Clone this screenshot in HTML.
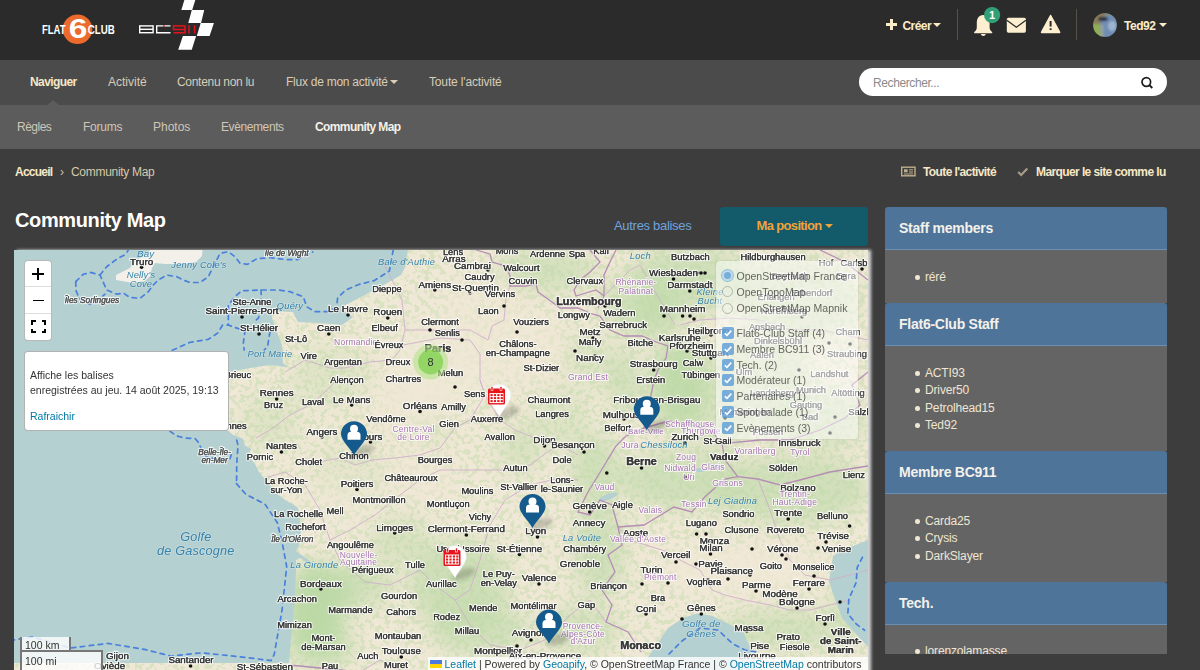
<!DOCTYPE html>
<html><head><meta charset="utf-8">
<style>
*{box-sizing:border-box;margin:0;padding:0}
html,body{width:1200px;height:670px;overflow:hidden;background:#3d3d3d;font-family:"Liberation Sans",sans-serif}
.a{position:absolute;white-space:nowrap}
#hdr{position:absolute;left:0;top:0;width:1200px;height:60px;background:#2b2b2b}
#nav{position:absolute;left:0;top:60px;width:1200px;height:45px;background:#4b4b4b}
#sub{position:absolute;left:0;top:105px;width:1200px;height:44px;background:#5c5c5c}
.t12{font-size:12px;line-height:12px}
.nv{color:#d9cdb8;font-size:12px;line-height:12px;top:76px}
.sn{color:#cfc6b6;font-size:12px;line-height:12px;top:121px}
.cream{color:#f6e7c6}
.sb{position:absolute;left:885px;width:282px}
.sbh{position:absolute;left:0;width:282px;height:43px;background:#4e7499;border-radius:3px 3px 0 0;border-bottom:1px solid #6a8fb3}
.sbh span{position:absolute;left:14px;top:13.8px;font-size:14px;line-height:14px;font-weight:bold;color:#f4f1ea;letter-spacing:-0.25px}
.sbb{position:absolute;left:0;width:282px;background:#646464}
.li{position:absolute;left:40px;font-size:12px;line-height:12px;color:#efe6d3;letter-spacing:-0.15px}
.li:before{content:"";position:absolute;left:-9.8px;top:4.2px;width:4.6px;height:4.6px;border-radius:50%;background:#efe6d3}
#map{position:absolute;left:14px;top:250px;width:854px;height:430px;background:#b4cfd0;overflow:hidden;box-shadow:3px 0 3px rgba(255,255,255,0.8)}
</style></head><body>
<div id="hdr"></div>
<div id="nav"></div>
<div id="sub"></div>

<!-- header -->
<svg width="240" height="60" style="position:absolute;left:0;top:0">
 <circle cx="77.5" cy="29.2" r="14.8" fill="#ec6a2c"/>
 <text x="78.2" y="38.2" font-family="Liberation Sans" font-weight="bold" font-size="27.5" fill="#fff" text-anchor="middle" transform="translate(78.2 38.2) scale(1.22 1.02) translate(-78.2 -38.2)">6</text>
 <text x="42" y="33.9" font-family="Liberation Sans" font-weight="bold" font-size="12" fill="#fff" textLength="23.6" lengthAdjust="spacingAndGlyphs">FLAT</text>
 <text x="87.8" y="33.9" font-family="Liberation Sans" font-weight="bold" font-size="12" fill="#fff" textLength="27" lengthAdjust="spacingAndGlyphs">CLUB</text>
 <polygon points="184.4,0 195.3,0 192.2,10.1 181.3,10.1" fill="#fff"/>
 <polygon points="191.8,10.1 204.2,10.1 201.1,22.9 188.3,22.9" fill="#fff"/>
 <polygon points="200.7,22.9 213.9,22.9 209.6,36.1 196.8,36.1" fill="#fff"/>
 <polygon points="182.9,36.1 196.1,36.1 191.8,49.7 178.2,49.7" fill="#fff"/>
 <g fill="none" stroke="#fff" stroke-width="1.4">
  <rect x="139.7" y="25.9" width="13.4" height="6.8"/>
  <line x1="139.7" y1="29.3" x2="153.1" y2="29.3"/>
  <polyline points="170.5,25.9 156.7,25.9 156.7,32.7 170.5,32.7"/>
 </g>
 <rect x="163" y="25.2" width="1.6" height="1.6" fill="#e3141b"/>
 <g fill="none" stroke="#e3141b" stroke-width="1.5">
  <rect x="173.5" y="25.9" width="11.5" height="3.6"/>
  <polyline points="185,29.5 185,32.7 173.5,32.7"/>
  <line x1="189" y1="25.2" x2="189" y2="33.4"/>
  <line x1="194.6" y1="25.2" x2="194.6" y2="33.4"/>
 </g>
</svg>
<div style="position:absolute;left:886.3px;top:23.2px;width:10.6px;height:2.6px;background:#fbecc8"></div>
<div style="position:absolute;left:890.3px;top:19.2px;width:2.6px;height:10.6px;background:#fbecc8"></div>
<div class="a" style="left:902.5px;top:19.6px;font-size:12px;line-height:12px;font-weight:bold;color:#fbecc8;letter-spacing:-0.55px">Créer</div>
<div style="position:absolute;left:933px;top:23px;width:0;height:0;border-left:4px solid transparent;border-right:4px solid transparent;border-top:4.5px solid #fbecc8"></div>
<div style="position:absolute;left:956.5px;top:9px;width:1.5px;height:31px;background:#57534b"></div>
<div style="position:absolute;left:1075.5px;top:9px;width:1.5px;height:31px;background:#57534b"></div>
<svg width="120" height="40" style="position:absolute;left:965px;top:5px">
 <!-- bell -->
 <path d="M18.3,10 C13.5,10 11.8,14 11.8,18 L11.8,22.5 C11.8,24.5 10.5,26 9.2,27 L9.2,28.2 L27.2,28.2 L27.2,27 C25.9,26 24.6,24.5 24.6,22.5 L24.6,18 C24.6,14 23,10 18.3,10 Z" fill="#fdefd0"/>
 <path d="M15.8,29 A2.6,2.6 0 0,0 20.8,29 Z" fill="#fdefd0"/>
 <circle cx="27.1" cy="10.1" r="8.1" fill="#31a076"/>
 <text x="27.1" y="14.3" font-family="Liberation Sans" font-size="11" font-weight="bold" fill="#fff" text-anchor="middle">1</text>
 <!-- envelope -->
 <rect x="41.8" y="12.8" width="19.1" height="14.9" rx="1.6" fill="#fdefd0"/>
 <polyline points="41.8,15.3 51.35,22.2 60.9,15.3" fill="none" stroke="#2b2b2b" stroke-width="1.3"/>
 <!-- warning -->
 <path d="M85.6,10.3 L94.6,26.8 Q95.2,27.7 94.1,27.7 L77.1,27.7 Q76,27.7 76.6,26.8 Z" fill="#fdefd0" stroke="#fdefd0" stroke-width="1.2" stroke-linejoin="round"/>
 <rect x="84.6" y="16" width="2" height="5.6" fill="#2b2b2b"/>
 <rect x="84.6" y="23.3" width="2" height="1.7" fill="#2b2b2b"/>
</svg>
<svg width="26" height="26" style="position:absolute;left:1092.3px;top:12.4px">
 <defs><clipPath id="av"><circle cx="13" cy="13" r="12"/></clipPath><filter id="avb"><feGaussianBlur stdDeviation="0.9"/></filter></defs>
 <g clip-path="url(#av)"><g filter="url(#avb)">
  <rect x="0" y="0" width="26" height="26" fill="#7f8a78"/>
  <rect x="0" y="0" width="13" height="12" fill="#8b7b5c"/>
  <rect x="0" y="12" width="11" height="14" fill="#8fae55"/>
  <ellipse cx="17" cy="15" rx="9" ry="12" fill="#6f8db5"/>
  <ellipse cx="20" cy="14" rx="4" ry="5" fill="#9fb5cf"/>
  <ellipse cx="11" cy="7" rx="5" ry="2.2" fill="#2b3346"/>
  <rect x="8.5" y="13" width="3" height="13" fill="#9aa0a0"/>
 </g></g>
</svg>
<div class="a" style="left:1124px;top:19.8px;font-size:12px;line-height:12px;font-weight:bold;color:#fbecc8;letter-spacing:-0.45px">Ted92</div>
<div style="position:absolute;left:1159px;top:23px;width:0;height:0;border-left:4px solid transparent;border-right:4px solid transparent;border-top:4.5px solid #fbecc8"></div>


<!-- nav -->
<div class="a nv cream" style="left:30px;font-weight:bold;letter-spacing:-0.6px">Naviguer</div>
<div class="a nv" style="left:108px">Activité</div>
<div class="a nv" style="left:177px;letter-spacing:-0.3px">Contenu non lu</div>
<div class="a nv" style="left:286px;letter-spacing:-0.25px">Flux de mon activité</div>
<div style="position:absolute;left:390px;top:80px;width:0;height:0;border-left:4px solid transparent;border-right:4px solid transparent;border-top:4.5px solid #d9cdb8"></div>
<div class="a nv" style="left:429px;letter-spacing:-0.15px">Toute l'activité</div>
<div style="position:absolute;left:858.5px;top:68px;width:308.5px;height:28px;background:#fff;border-radius:14px"></div>
<div class="a" style="left:873px;top:77px;font-size:12px;line-height:12px;color:#8a8a8a;letter-spacing:-0.4px">Rechercher...</div>
<svg width="16" height="16" style="position:absolute;left:1139px;top:74px"><circle cx="7.3" cy="8" r="4.3" fill="none" stroke="#1e1e1e" stroke-width="1.7"/><line x1="10.3" y1="11" x2="13.3" y2="14" stroke="#1e1e1e" stroke-width="1.9"/></svg>

<!-- subnav -->
<div style="position:absolute;left:47px;top:100px;width:0;height:0;border-left:6px solid transparent;border-right:6px solid transparent;border-bottom:5px solid #5c5c5c"></div>
<div class="a sn" style="left:17px;letter-spacing:-0.5px">Règles</div>
<div class="a sn" style="left:83px;letter-spacing:-0.25px">Forums</div>
<div class="a sn" style="left:153px">Photos</div>
<div class="a sn" style="left:221px;letter-spacing:-0.4px">Evènements</div>
<div class="a sn" style="left:315px;font-weight:bold;color:#f4f0e6;letter-spacing:-0.6px">Community Map</div>

<!-- breadcrumb -->
<div class="a" style="left:15px;top:166px;font-size:12px;line-height:12px;font-weight:bold;color:#f6e7c6;letter-spacing:-0.75px">Accueil</div>
<div class="a" style="left:60px;top:166px;font-size:12px;line-height:12px;color:#cfc0a0">›</div>
<div class="a" style="left:71px;top:166px;font-size:12px;line-height:12px;color:#d8c9a8;letter-spacing:-0.3px">Community Map</div>
<svg width="16" height="12" style="position:absolute;left:901px;top:166px"><rect x="0.7" y="1.2" width="13.3" height="8.6" fill="none" stroke="#bfae8e" stroke-width="1.4"/><rect x="3" y="3.3" width="3.6" height="3" fill="#bfae8e"/><line x1="8" y1="3.8" x2="12" y2="3.8" stroke="#bfae8e" stroke-width="1"/><line x1="8" y1="6" x2="12" y2="6" stroke="#bfae8e" stroke-width="1"/><line x1="3" y1="8" x2="12" y2="8" stroke="#bfae8e" stroke-width="0.9"/></svg>
<svg width="12" height="10" style="position:absolute;left:1016.5px;top:167px"><polyline points="1.2,5 4.2,8 10.3,1.5" fill="none" stroke="#a89c86" stroke-width="2.2"/></svg>
<div class="a" style="left:923px;top:166px;font-size:12px;line-height:12px;font-weight:bold;color:#f6e7c6;letter-spacing:-0.6px">Toute l'activité</div>
<div class="a" style="left:1036px;top:166px;font-size:12px;line-height:12px;font-weight:bold;color:#f6e7c6;letter-spacing:-0.6px">Marquer le site comme lu</div>

<!-- title -->
<div class="a" style="left:15px;top:210px;font-size:20px;line-height:20px;font-weight:bold;color:#fff;letter-spacing:-0.38px">Community Map</div>
<div class="a" style="left:614px;top:219px;font-size:13px;line-height:13px;color:#6fa3dc;letter-spacing:-0.3px">Autres balises</div>
<div style="position:absolute;left:720px;top:207px;width:148px;height:39px;background:#135a6a;border-radius:3px"></div>
<div class="a" style="left:756.5px;top:219px;font-size:13px;line-height:13px;font-weight:bold;color:#f2a23a;letter-spacing:-0.65px">Ma position</div>
<div style="position:absolute;left:824.5px;top:224px;width:0;height:0;border-left:4px solid transparent;border-right:4px solid transparent;border-top:4.5px solid #f2a23a"></div>

<!-- sidebar -->
<div class="sb" style="top:207px;height:447px;overflow:hidden">
  <div class="sbh" style="top:0"><span>Staff members</span></div>
  <div class="sbb" style="top:43px;height:53px"><div class="li" style="top:21px">réré</div></div>
  <div class="sbh" style="top:96px"><span>Flat6-Club Staff</span></div>
  <div class="sbb" style="top:139px;height:105px">
    <div class="li" style="top:21px">ACTI93</div>
    <div class="li" style="top:38px">Driver50</div>
    <div class="li" style="top:56px">Petrolhead15</div>
    <div class="li" style="top:73px">Ted92</div>
  </div>
  <div class="sbh" style="top:244px"><span>Membre BC911</span></div>
  <div class="sbb" style="top:287px;height:88px">
    <div class="li" style="top:21px">Carda25</div>
    <div class="li" style="top:38px">Crysis</div>
    <div class="li" style="top:56px">DarkSlayer</div>
  </div>
  <div class="sbh" style="top:375px"><span>Tech.</span></div>
  <div class="sbb" style="top:418px;height:100px">
    <div class="li" style="top:20px">lorenzolamasse</div>
  </div>
</div>

<!-- map -->
<div id="map"><!--MAP--><svg width="854" height="430" viewBox="14 250 854 430" style="position:absolute;left:0;top:0">
<defs><filter id="blur" x="-50%" y="-50%" width="200%" height="200%"><feGaussianBlur stdDeviation="10"/></filter><filter id="blur2" x="-50%" y="-50%" width="200%" height="200%"><feGaussianBlur stdDeviation="2"/></filter></defs>
<rect x="14" y="250" width="854" height="430" fill="#f0e8d6"/>
<g filter="url(#blur)">
<ellipse cx="315" cy="612" rx="30" ry="50" fill="#bcd9a6" opacity="1.0"/>
<ellipse cx="322" cy="648" rx="32" ry="16" fill="#bcd9a6" opacity="0.85"/>
<ellipse cx="335" cy="588" rx="25" ry="22" fill="#bcd9a6" opacity="0.6"/>
<ellipse cx="360" cy="585" rx="35" ry="25" fill="#bcd9a6" opacity="0.5"/>
<ellipse cx="400" cy="540" rx="30" ry="25" fill="#bcd9a6" opacity="0.45"/>
<ellipse cx="460" cy="585" rx="50" ry="45" fill="#bcd9a6" opacity="0.65"/>
<ellipse cx="480" cy="630" rx="50" ry="25" fill="#bcd9a6" opacity="0.6"/>
<ellipse cx="580" cy="630" rx="40" ry="25" fill="#bcd9a6" opacity="0.5"/>
<ellipse cx="600" cy="550" rx="25" ry="50" fill="#bcd9a6" opacity="0.6"/>
<ellipse cx="595" cy="470" rx="25" ry="35" fill="#bcd9a6" opacity="0.6"/>
<ellipse cx="680" cy="480" rx="60" ry="30" fill="#bcd9a6" opacity="0.6"/>
<ellipse cx="790" cy="490" rx="80" ry="35" fill="#bcd9a6" opacity="0.6"/>
<ellipse cx="780" cy="630" rx="60" ry="20" fill="#bcd9a6" opacity="0.55"/>
<ellipse cx="850" cy="610" rx="20" ry="35" fill="#bcd9a6" opacity="0.5"/>
<ellipse cx="680" cy="385" rx="30" ry="45" fill="#bcd9a6" opacity="0.9"/>
<ellipse cx="625" cy="385" rx="15" ry="35" fill="#bcd9a6" opacity="0.6"/>
<ellipse cx="650" cy="320" rx="30" ry="20" fill="#bcd9a6" opacity="0.6"/>
<ellipse cx="545" cy="270" rx="50" ry="22" fill="#bcd9a6" opacity="0.55"/>
<ellipse cx="690" cy="280" rx="60" ry="35" fill="#bcd9a6" opacity="0.6"/>
<ellipse cx="640" cy="300" rx="40" ry="30" fill="#bcd9a6" opacity="0.5"/>
<ellipse cx="760" cy="380" rx="50" ry="50" fill="#bcd9a6" opacity="0.4"/>
<ellipse cx="800" cy="300" rx="60" ry="40" fill="#bcd9a6" opacity="0.4"/>
<ellipse cx="820" cy="420" rx="50" ry="30" fill="#bcd9a6" opacity="0.45"/>
<ellipse cx="520" cy="450" rx="20" ry="25" fill="#bcd9a6" opacity="0.45"/>
<ellipse cx="560" cy="420" rx="30" ry="30" fill="#bcd9a6" opacity="0.35"/>
<ellipse cx="330" cy="375" rx="40" ry="30" fill="#bcd9a6" opacity="0.3"/>
<ellipse cx="270" cy="420" rx="30" ry="30" fill="#bcd9a6" opacity="0.3"/>
<ellipse cx="430" cy="430" rx="20" ry="15" fill="#bcd9a6" opacity="0.3"/>
<ellipse cx="350" cy="470" rx="40" ry="30" fill="#bcd9a6" opacity="0.2"/>
<ellipse cx="590" cy="360" rx="30" ry="30" fill="#bcd9a6" opacity="0.3"/>
<ellipse cx="720" cy="430" rx="25" ry="20" fill="#bcd9a6" opacity="0.5"/>
</g>
<filter id="spk" x="0" y="0" width="100%" height="100%" color-interpolation-filters="sRGB"><feTurbulence type="fractalNoise" baseFrequency="0.2" numOctaves="3" seed="7"/><feColorMatrix type="matrix" values="0 0 0 0 0.74  0 0 0 0 0.85  0 0 0 0 0.65  16 0 0 0 -8.3"/></filter>
<rect x="14" y="250" width="854" height="430" fill="#fff" filter="url(#spk)" opacity="0.42"/>
<g filter="url(#blur)">
<ellipse cx="440" cy="365" rx="55" ry="45" fill="#f0e8d6" opacity="0.7"/>
<ellipse cx="525" cy="345" rx="40" ry="40" fill="#f0e8d6" opacity="0.6"/>
<ellipse cx="410" cy="405" rx="40" ry="25" fill="#f0e8d6" opacity="0.6"/>
<ellipse cx="745" cy="570" rx="85" ry="25" fill="#f0e8d6" opacity="0.8"/>
<ellipse cx="420" cy="475" rx="40" ry="30" fill="#f0e8d6" opacity="0.5"/>
<ellipse cx="340" cy="500" rx="35" ry="30" fill="#f0e8d6" opacity="0.4"/>
<ellipse cx="480" cy="300" rx="40" ry="30" fill="#f0e8d6" opacity="0.5"/>
</g>
<polygon points="14.0,250.0 408.0,250.0 405.0,267.0 401.0,275.0 382.0,286.0 359.0,298.0 340.0,308.0 353.0,317.0 342.0,325.0 320.0,323.0 298.0,322.0 293.0,312.0 270.0,311.0 275.0,327.0 282.0,345.0 283.0,363.0 288.0,367.0 270.0,365.0 250.0,368.0 230.0,372.0 200.0,372.0 150.0,380.0 150.0,420.0 228.7,431.0 232.7,434.7 243.0,438.7 244.7,445.3 251.0,449.0 248.7,456.0 255.0,464.0 259.0,472.0 265.5,480.0 272.7,489.6 282.0,498.0 297.8,507.5 300.0,520.0 301.0,534.0 299.0,545.0 296.0,551.0 310.0,561.0 316.0,567.0 312.0,566.0 300.0,558.0 296.0,560.0 296.0,572.0 294.6,600.0 291.0,640.0 289.0,663.0 14.0,663.0" fill="#b5d0d0"/>
<polygon points="150.0,250.0 202.5,250.0 202.0,256.0 196.0,262.0 185.0,264.0 165.0,264.0 155.0,263.0 152.0,268.0 150.0,276.0 145.0,281.0 132.0,283.0 122.0,281.0 116.0,280.0 116.0,275.0 122.0,272.0 130.0,268.0 134.0,262.0 140.0,258.0 147.0,254.0" fill="#f2f0e8"/>
<polygon points="640.0,680.0 648.0,657.0 668.0,628.0 683.0,618.0 697.0,613.6 712.0,615.7 729.0,624.0 743.0,632.0 750.0,647.0 755.0,665.0 760.0,680.0" fill="#b5d0d0"/>
<polygon points="868.0,540.0 848.0,548.0 833.0,556.0 829.0,582.0 835.0,599.0 842.0,618.0 856.0,634.0 868.0,647.0" fill="#b5d0d0"/>
<ellipse cx="608" cy="497" rx="10" ry="3" fill="#b5d0d0" transform="rotate(-20 608 497)"/>
<ellipse cx="700" cy="470" rx="6" ry="2" fill="#b5d0d0" transform="rotate(0 700 470)"/>
<ellipse cx="717" cy="467" rx="5" ry="2" fill="#b5d0d0" transform="rotate(30 717 467)"/>
<polyline points="285.0,372.0 305.0,360.0 330.0,368.0 345.0,368.0 370.0,362.0 392.0,360.0 400.0,350.0 405.0,330.0 402.0,300.0 395.0,286.0 382.0,260.0" fill="none" stroke="#cfb0cc" stroke-width="0.9"/>
<polyline points="256.0,438.0 270.0,430.0 290.0,415.0 310.0,405.0 325.0,392.0 335.0,382.0" fill="none" stroke="#cfb0cc" stroke-width="0.9"/>
<polyline points="300.0,462.0 318.0,462.0 340.0,458.0 355.0,465.0 372.0,460.0 395.0,458.0 420.0,455.0 440.0,448.0 455.0,428.0 470.0,420.0 485.0,395.0 480.0,380.0 480.0,354.0 470.0,340.0 440.0,338.0 403.0,345.0" fill="none" stroke="#cfb0cc" stroke-width="0.9"/>
<polyline points="405.0,330.0 430.0,330.0 470.0,330.0 488.0,340.0 492.0,326.0 504.0,320.0 506.0,298.0 510.0,286.0" fill="none" stroke="#cfb0cc" stroke-width="0.9"/>
<polyline points="480.0,380.0 485.0,395.0 500.0,420.0 515.0,430.0 540.0,440.0 560.0,445.0 578.0,455.0" fill="none" stroke="#cfb0cc" stroke-width="0.9"/>
<polyline points="265.0,478.0 285.0,472.0 305.0,485.0 320.0,510.0 330.0,540.0 340.0,560.0 365.0,582.0 390.0,585.0 420.0,570.0 435.0,585.0 455.0,600.0 470.0,590.0 480.0,560.0 490.0,525.0 505.0,500.0 530.0,485.0 560.0,478.0 578.0,480.0" fill="none" stroke="#cfb0cc" stroke-width="0.9"/>
<polyline points="330.0,540.0 350.0,530.0 375.0,515.0 400.0,495.0 420.0,480.0 440.0,470.0 470.0,470.0 505.0,470.0 530.0,465.0 550.0,450.0 560.0,445.0" fill="none" stroke="#cfb0cc" stroke-width="0.9"/>
<polyline points="455.0,600.0 470.0,625.0 490.0,645.0 520.0,650.0 545.0,640.0 570.0,615.0 590.0,600.0 606.0,622.0" fill="none" stroke="#cfb0cc" stroke-width="0.9"/>
<polyline points="618.0,527.0 630.0,540.0 668.0,552.0 680.0,560.0 700.0,570.0 712.0,590.0 725.0,595.0 745.0,600.0 770.0,605.0 790.0,610.0 810.0,610.0 830.0,605.0 850.0,600.0" fill="none" stroke="#cfb0cc" stroke-width="0.9"/>
<polyline points="758.0,479.0 770.0,510.0 780.0,540.0 790.0,560.0 805.0,575.0 830.0,580.0 850.0,575.0 868.0,570.0" fill="none" stroke="#cfb0cc" stroke-width="0.9"/>
<polyline points="604.0,296.0 630.0,270.0 640.0,265.0 660.0,300.0 675.0,325.0" fill="none" stroke="#cfb0cc" stroke-width="0.9"/>
<polyline points="680.0,325.0 700.0,320.0 730.0,318.0 760.0,320.0 790.0,330.0 820.0,330.0 845.0,335.0 868.0,340.0" fill="none" stroke="#cfb0cc" stroke-width="0.9"/>
<polyline points="360.0,672.0 380.0,660.0 400.0,670.0" fill="none" stroke="#cfb0cc" stroke-width="0.9"/>
<polyline points="476.0,250.0 490.0,254.0 492.0,262.0 506.0,266.0 510.0,276.0 510.0,286.0 526.0,286.0 536.0,284.0 538.0,292.0 552.0,302.0 560.0,308.0 578.0,308.0 592.0,314.0 600.0,316.0 610.0,330.0 624.0,336.0 642.0,336.0 656.0,342.0 668.0,346.0 666.0,358.0 658.0,370.0 654.0,380.0 650.0,400.0 646.0,415.0 644.0,428.0" fill="none" stroke="#b58db5" stroke-width="1.3"/>
<polyline points="590.0,250.0 600.0,262.0 590.0,272.0 580.0,280.0 574.0,290.0 576.0,296.0 596.0,290.0 604.0,296.0 598.0,308.0" fill="none" stroke="#b58db5" stroke-width="1.3"/>
<polyline points="616.0,250.0 610.0,262.0 604.0,275.0 604.0,296.0" fill="none" stroke="#b58db5" stroke-width="1.3"/>
<polyline points="644.0,428.0 626.0,436.0 616.0,446.0 600.6,471.5 588.0,492.0 578.0,512.0 590.0,515.0 600.0,500.0 612.0,505.0 618.0,527.0" fill="none" stroke="#b58db5" stroke-width="1.3"/>
<polyline points="644.0,428.0 669.0,421.0 694.5,426.0 712.0,431.0 722.0,443.6 725.0,460.0 737.7,476.6" fill="none" stroke="#b58db5" stroke-width="1.3"/>
<polyline points="618.0,527.0 644.0,525.0 674.0,507.0 692.0,512.0 704.7,497.0 725.0,479.0 737.7,476.6 758.0,479.0" fill="none" stroke="#b58db5" stroke-width="1.3"/>
<polyline points="618.0,527.0 622.0,545.0 608.0,555.0 615.0,572.0 602.0,590.0 612.0,605.0 606.0,622.0 628.0,632.0 641.0,652.0" fill="none" stroke="#b58db5" stroke-width="1.3"/>
<polyline points="758.0,479.0 780.0,485.0 800.0,480.0 830.0,472.0 868.0,466.0" fill="none" stroke="#b58db5" stroke-width="1.3"/>
<polyline points="722.0,443.6 760.0,440.0 790.0,440.0 820.0,430.0 845.0,418.0 860.0,405.0 852.0,385.0 868.0,372.0" fill="none" stroke="#b58db5" stroke-width="1.3"/>
<polyline points="820.0,250.0 845.0,262.0 868.0,280.0" fill="none" stroke="#b58db5" stroke-width="1.3"/>
<polyline points="289.0,665.0 320.0,668.0 360.0,672.0" fill="none" stroke="#b58db5" stroke-width="1.3"/>
<polyline points="75.8,281.7 83.3,274.2 90.8,272.5 100.0,275.0 106.7,290.0 116.7,294.2 123.3,293.0 130.0,297.5 140.0,298.3 148.3,291.7 153.3,285.0 158.3,280.0 166.7,275.0 176.7,276.7 183.3,280.0 190.0,282.5 200.0,282.5 208.3,276.7 210.8,271.7 216.7,260.0 220.0,253.3 228.3,251.7 235.0,256.7 240.0,263.3 247.5,264.4 257.0,258.6 270.5,257.7 285.8,259.6 297.3,259.6 305.0,255.8 312.7,252.0" fill="none" stroke="#4a80dc" stroke-width="1.7" stroke-dasharray="4.5,4.5" stroke-linecap="round"/>
<polyline points="75.8,281.7 75.8,290.0 79.2,298.3 90.0,304.2 100.0,298.3 105.0,294.2" fill="none" stroke="#4a80dc" stroke-width="1.7" stroke-dasharray="4.5,4.5" stroke-linecap="round"/>
<polyline points="100.0,275.0 106.7,266.7 116.7,259.2 125.8,254.2 128.3,250.0" fill="none" stroke="#4a80dc" stroke-width="1.7" stroke-dasharray="4.5,4.5" stroke-linecap="round"/>
<polyline points="393.2,250.0 389.4,271.0 374.0,280.7 358.7,284.5 345.3,290.3 337.6,298.0 336.7,306.7 328.3,311.7 315.0,311.7 306.7,306.7 303.3,296.7 290.0,291.7 278.3,290.0 261.0,290.0 241.7,290.8 236.7,295.0 228.3,305.0 228.3,325.0" fill="none" stroke="#4a80dc" stroke-width="1.7" stroke-dasharray="4.5,4.5" stroke-linecap="round"/>
<polyline points="261.0,290.0 261.7,310.0 258.3,318.3 255.0,320.8" fill="none" stroke="#4a80dc" stroke-width="1.7" stroke-dasharray="4.5,4.5" stroke-linecap="round"/>
<polyline points="172.3,350.3 189.5,342.5 208.4,339.3 217.8,333.0 222.5,325.2 228.3,325.0 235.0,327.5 245.0,330.8 243.3,343.3 244.2,350.0" fill="none" stroke="#4a80dc" stroke-width="1.7" stroke-dasharray="4.5,4.5" stroke-linecap="round"/>
<polyline points="270.0,331.7 267.5,346.7 264.2,350.0" fill="none" stroke="#4a80dc" stroke-width="1.7" stroke-dasharray="4.5,4.5" stroke-linecap="round"/>
<polyline points="170.0,431.3 176.7,436.0 184.7,438.0 195.3,438.7 198.7,442.7 202.0,450.7 206.0,456.0 216.7,460.0 230.0,458.7 232.7,450.7" fill="none" stroke="#4a80dc" stroke-width="1.7" stroke-dasharray="4.5,4.5" stroke-linecap="round"/>
<polyline points="236.7,440.0 238.0,445.3 236.7,464.0 236.6,480.0 235.0,482.0 246.0,494.5 264.8,503.9 277.3,522.7 282.0,541.5 286.7,566.6 282.0,610.5 274.2,654.4 271.0,660.6 246.0,657.5 202.0,652.8 170.7,656.0 145.7,649.7 108.0,643.4 70.4,648.0 32.8,637.0 14.0,640.0" fill="none" stroke="#4a80dc" stroke-width="1.7" stroke-dasharray="4.5,4.5" stroke-linecap="round"/>
<polyline points="669.0,654.0 682.0,641.0 700.0,628.0 718.0,630.0 733.0,644.0 745.0,650.0 756.0,652.0" fill="none" stroke="#4a80dc" stroke-width="1.7" stroke-dasharray="4.5,4.5" stroke-linecap="round"/>
<polyline points="862.5,557.2 857.2,567.6 856.2,582.3 848.9,599.0 847.8,613.6 856.2,624.0 864.6,630.3" fill="none" stroke="#4a80dc" stroke-width="1.7" stroke-dasharray="4.5,4.5" stroke-linecap="round"/>
<circle cx="141.6" cy="267.2" r="1.8" fill="#111"/>
<circle cx="242" cy="317" r="1.8" fill="#111"/>
<circle cx="259" cy="334" r="1.8" fill="#111"/>
<circle cx="276.7" cy="399" r="1.8" fill="#111"/>
<circle cx="281.4" cy="452" r="1.8" fill="#111"/>
<circle cx="348" cy="315" r="1.8" fill="#111"/>
<circle cx="387.8" cy="318" r="1.8" fill="#111"/>
<circle cx="328.8" cy="334" r="1.8" fill="#111"/>
<circle cx="351.7" cy="405" r="1.8" fill="#111"/>
<circle cx="420" cy="411.4" r="1.8" fill="#111"/>
<circle cx="322" cy="437" r="1.8" fill="#111"/>
<circle cx="370.5" cy="442" r="1.8" fill="#111"/>
<circle cx="544.5" cy="446" r="1.8" fill="#111"/>
<circle cx="584" cy="452" r="1.8" fill="#111"/>
<circle cx="434.8" cy="290" r="1.8" fill="#111"/>
<circle cx="488" cy="270" r="1.8" fill="#111"/>
<circle cx="470" cy="293" r="1.8" fill="#111"/>
<circle cx="517" cy="332" r="1.8" fill="#111"/>
<circle cx="504" cy="306" r="1.8" fill="#111"/>
<circle cx="605" cy="306" r="1.8" fill="#111"/>
<circle cx="673.5" cy="279" r="1.8" fill="#111"/>
<circle cx="689.8" cy="291" r="1.8" fill="#111"/>
<circle cx="697" cy="273" r="1.8" fill="#111"/>
<circle cx="701" cy="273" r="1.8" fill="#111"/>
<circle cx="705" cy="273" r="1.8" fill="#111"/>
<circle cx="682.6" cy="316" r="1.8" fill="#111"/>
<circle cx="664" cy="316" r="1.8" fill="#111"/>
<circle cx="690" cy="316" r="1.8" fill="#111"/>
<circle cx="694" cy="319" r="1.8" fill="#111"/>
<circle cx="644" cy="325" r="1.8" fill="#111"/>
<circle cx="593" cy="338" r="1.8" fill="#111"/>
<circle cx="595" cy="356" r="1.8" fill="#111"/>
<circle cx="653.7" cy="370" r="1.8" fill="#111"/>
<circle cx="687" cy="351" r="1.8" fill="#111"/>
<circle cx="711" cy="358" r="1.8" fill="#111"/>
<circle cx="679.8" cy="344" r="1.8" fill="#111"/>
<circle cx="711" cy="335" r="1.8" fill="#111"/>
<circle cx="575" cy="351" r="1.8" fill="#111"/>
<circle cx="624" cy="419" r="1.8" fill="#111"/>
<circle cx="646" cy="421" r="1.8" fill="#111"/>
<circle cx="685" cy="443" r="1.8" fill="#111"/>
<circle cx="725" cy="418" r="1.8" fill="#111"/>
<circle cx="862" cy="269" r="1.8" fill="#111"/>
<circle cx="783" cy="307" r="1.8" fill="#111"/>
<circle cx="802" cy="317" r="1.8" fill="#111"/>
<circle cx="850" cy="344" r="1.8" fill="#111"/>
<circle cx="829" cy="343" r="1.8" fill="#111"/>
<circle cx="799" cy="370" r="1.8" fill="#111"/>
<circle cx="835" cy="417" r="1.8" fill="#111"/>
<circle cx="830" cy="433" r="1.8" fill="#111"/>
<circle cx="357" cy="489.5" r="1.8" fill="#111"/>
<circle cx="394.7" cy="533" r="1.8" fill="#111"/>
<circle cx="466.3" cy="535" r="1.8" fill="#111"/>
<circle cx="537.5" cy="537" r="1.8" fill="#111"/>
<circle cx="519.4" cy="554.5" r="1.8" fill="#111"/>
<circle cx="539" cy="584" r="1.8" fill="#111"/>
<circle cx="320.9" cy="589" r="1.8" fill="#111"/>
<circle cx="401.3" cy="657" r="1.8" fill="#111"/>
<circle cx="517" cy="646" r="1.8" fill="#111"/>
<circle cx="531" cy="640" r="1.8" fill="#111"/>
<circle cx="606.8" cy="473" r="1.8" fill="#111"/>
<circle cx="641.5" cy="468" r="1.8" fill="#111"/>
<circle cx="589.7" cy="512" r="1.8" fill="#111"/>
<circle cx="589" cy="525" r="1.8" fill="#111"/>
<circle cx="685" cy="477" r="1.8" fill="#111"/>
<circle cx="788.2" cy="519" r="1.8" fill="#111"/>
<circle cx="849.6" cy="526" r="1.8" fill="#111"/>
<circle cx="696.6" cy="534" r="1.8" fill="#111"/>
<circle cx="706" cy="534" r="1.8" fill="#111"/>
<circle cx="712" cy="542" r="1.8" fill="#111"/>
<circle cx="826" cy="542" r="1.8" fill="#111"/>
<circle cx="752" cy="549" r="1.8" fill="#111"/>
<circle cx="782" cy="555" r="1.8" fill="#111"/>
<circle cx="818" cy="548" r="1.8" fill="#111"/>
<circle cx="786" cy="559" r="1.8" fill="#111"/>
<circle cx="696" cy="564" r="1.8" fill="#111"/>
<circle cx="710.5" cy="554" r="1.8" fill="#111"/>
<circle cx="676" cy="562" r="1.8" fill="#111"/>
<circle cx="750" cy="575" r="1.8" fill="#111"/>
<circle cx="728" cy="579" r="1.8" fill="#111"/>
<circle cx="642" cy="584" r="1.8" fill="#111"/>
<circle cx="668" cy="583" r="1.8" fill="#111"/>
<circle cx="708" cy="580" r="1.8" fill="#111"/>
<circle cx="814" cy="576" r="1.8" fill="#111"/>
<circle cx="809" cy="589" r="1.8" fill="#111"/>
<circle cx="756" cy="591" r="1.8" fill="#111"/>
<circle cx="797" cy="608" r="1.8" fill="#111"/>
<circle cx="646" cy="614" r="1.8" fill="#111"/>
<circle cx="701.3" cy="614" r="1.8" fill="#111"/>
<circle cx="682" cy="619" r="1.8" fill="#111"/>
<circle cx="825" cy="624" r="1.8" fill="#111"/>
<circle cx="747" cy="631" r="1.8" fill="#111"/>
<circle cx="840" cy="602" r="1.8" fill="#111"/>
<circle cx="190.6" cy="666" r="1.8" fill="#111"/>
<circle cx="455" cy="387" r="1.8" fill="#111"/>
<circle cx="462" cy="340" r="1.8" fill="#111"/>
<circle cx="430" cy="330" r="1.8" fill="#111"/>
<g font-family="Liberation Sans, sans-serif" text-anchor="middle" stroke="#fff" stroke-opacity="0.75" stroke-width="2" paint-order="stroke" stroke-linejoin="round">
<text x="141.6" y="264.5" font-size="9.8" fill="#383838" letter-spacing="0" stroke-width="2.4">Truro</text>
<text x="141.6" y="264.5" font-size="9.8" fill="#383838" letter-spacing="0" stroke="#383838" stroke-width="0.25" stroke-opacity="1">Truro</text>
<text x="145.7" y="256.5" font-size="9.8" fill="#3582ab" letter-spacing="0.2" stroke-opacity="0.25" stroke-width="1.5" font-style="italic">Bay</text>
<text x="141" y="278.4" font-size="9.3" fill="#3582ab" letter-spacing="0.2" stroke-opacity="0.25" stroke-width="1.5" font-style="italic">Nelly's</text>
<text x="141" y="287.4" font-size="9.3" fill="#3582ab" letter-spacing="0.2" stroke-opacity="0.25" stroke-width="1.5" font-style="italic">Cove</text>
<text x="199" y="268.4" font-size="9.3" fill="#3582ab" letter-spacing="0.2" stroke-opacity="0.25" stroke-width="1.5" font-style="italic">Jenny Cole's</text>
<text x="92" y="302.5" font-size="8.3" fill="#555" letter-spacing="0" stroke-width="2.4" font-style="italic">Îles Sorlingues</text>
<text x="92" y="302.5" font-size="8.3" fill="#555" letter-spacing="0" stroke="#555" stroke-width="0.25" stroke-opacity="1" font-style="italic">Îles Sorlingues</text>
<text x="286.7" y="256.0" font-size="8.3" fill="#555" letter-spacing="0" stroke-width="2.4" font-style="italic">Île de Wight</text>
<text x="286.7" y="256.0" font-size="8.3" fill="#555" letter-spacing="0" stroke="#555" stroke-width="0.25" stroke-opacity="1" font-style="italic">Île de Wight</text>
<text x="252" y="305.1" font-size="9.3" fill="#383838" letter-spacing="0" stroke-width="2.4">Ste-Anne</text>
<text x="252" y="305.1" font-size="9.3" fill="#383838" letter-spacing="0" stroke="#383838" stroke-width="0.25" stroke-opacity="1">Ste-Anne</text>
<text x="242" y="314.0" font-size="9.8" fill="#383838" letter-spacing="0" stroke-width="2.4">Saint-Pierre-Port</text>
<text x="242" y="314.0" font-size="9.8" fill="#383838" letter-spacing="0" stroke="#383838" stroke-width="0.25" stroke-opacity="1">Saint-Pierre-Port</text>
<text x="259" y="331.2" font-size="9.8" fill="#383838" letter-spacing="0" stroke-width="2.4">St-Hélier</text>
<text x="259" y="331.2" font-size="9.8" fill="#383838" letter-spacing="0" stroke="#383838" stroke-width="0.25" stroke-opacity="1">St-Hélier</text>
<text x="290" y="309.4" font-size="9.3" fill="#3582ab" letter-spacing="0.2" stroke-opacity="0.25" stroke-width="1.5" font-style="italic">Quéry</text>
<text x="270" y="356.8" font-size="9.3" fill="#3582ab" letter-spacing="0.2" stroke-opacity="0.25" stroke-width="1.5" font-style="italic">Port Marie</text>
<text x="296" y="342.4" font-size="9.3" fill="#383838" letter-spacing="0" stroke-width="2.4">St-Lô</text>
<text x="296" y="342.4" font-size="9.3" fill="#383838" letter-spacing="0" stroke="#383838" stroke-width="0.25" stroke-opacity="1">St-Lô</text>
<text x="238" y="378.2" font-size="9.3" fill="#383838" letter-spacing="0" stroke-width="2.4">Brieuc</text>
<text x="238" y="378.2" font-size="9.3" fill="#383838" letter-spacing="0" stroke="#383838" stroke-width="0.25" stroke-opacity="1">Brieuc</text>
<text x="276.7" y="396.1" font-size="9.8" fill="#383838" letter-spacing="0" stroke-width="2.4">Rennes</text>
<text x="276.7" y="396.1" font-size="9.8" fill="#383838" letter-spacing="0" stroke="#383838" stroke-width="0.25" stroke-opacity="1">Rennes</text>
<text x="273.6" y="407.9" font-size="9.3" fill="#383838" letter-spacing="0" stroke-width="2.4">Bruz</text>
<text x="273.6" y="407.9" font-size="9.3" fill="#383838" letter-spacing="0" stroke="#383838" stroke-width="0.25" stroke-opacity="1">Bruz</text>
<text x="236.6" y="429.4" font-size="9.3" fill="#383838" letter-spacing="0" stroke-width="2.4">nnes</text>
<text x="236.6" y="429.4" font-size="9.3" fill="#383838" letter-spacing="0" stroke="#383838" stroke-width="0.25" stroke-opacity="1">nnes</text>
<text x="281.4" y="448.8" font-size="9.8" fill="#383838" letter-spacing="0" stroke-width="2.4">Nantes</text>
<text x="281.4" y="448.8" font-size="9.8" fill="#383838" letter-spacing="0" stroke="#383838" stroke-width="0.25" stroke-opacity="1">Nantes</text>
<text x="214.6" y="455.0" font-size="8.3" fill="#555" letter-spacing="0" stroke-width="2.4" font-style="italic">Belle-Île-</text>
<text x="214.6" y="455.0" font-size="8.3" fill="#555" letter-spacing="0" stroke="#555" stroke-width="0.25" stroke-opacity="1" font-style="italic">Belle-Île-</text>
<text x="214.6" y="463.0" font-size="8.3" fill="#555" letter-spacing="0" stroke-width="2.4" font-style="italic">en-Mer</text>
<text x="214.6" y="463.0" font-size="8.3" fill="#555" letter-spacing="0" stroke="#555" stroke-width="0.25" stroke-opacity="1" font-style="italic">en-Mer</text>
<text x="260" y="460.4" font-size="9.3" fill="#383838" letter-spacing="0" stroke-width="2.4">Pornic</text>
<text x="260" y="460.4" font-size="9.3" fill="#383838" letter-spacing="0" stroke="#383838" stroke-width="0.25" stroke-opacity="1">Pornic</text>
<text x="406.6" y="265.4" font-size="9.3" fill="#3582ab" letter-spacing="0.2" stroke-opacity="0.25" stroke-width="1.5" font-style="italic">Baie d'Authie</text>
<text x="387" y="292.4" font-size="9.3" fill="#383838" letter-spacing="0" stroke-width="2.4">Dieppe</text>
<text x="387" y="292.4" font-size="9.3" fill="#383838" letter-spacing="0" stroke="#383838" stroke-width="0.25" stroke-opacity="1">Dieppe</text>
<text x="348" y="312.1" font-size="9.8" fill="#383838" letter-spacing="0" stroke-width="2.4">Le Havre</text>
<text x="348" y="312.1" font-size="9.8" fill="#383838" letter-spacing="0" stroke="#383838" stroke-width="0.25" stroke-opacity="1">Le Havre</text>
<text x="387.8" y="315.3" font-size="9.8" fill="#383838" letter-spacing="0" stroke-width="2.4">Rouen</text>
<text x="387.8" y="315.3" font-size="9.8" fill="#383838" letter-spacing="0" stroke="#383838" stroke-width="0.25" stroke-opacity="1">Rouen</text>
<text x="328.8" y="331.2" font-size="9.8" fill="#383838" letter-spacing="0" stroke-width="2.4">Caen</text>
<text x="328.8" y="331.2" font-size="9.8" fill="#383838" letter-spacing="0" stroke="#383838" stroke-width="0.25" stroke-opacity="1">Caen</text>
<text x="384.6" y="331.1" font-size="9.3" fill="#383838" letter-spacing="0" stroke-width="2.4">Elbeuf</text>
<text x="384.6" y="331.1" font-size="9.3" fill="#383838" letter-spacing="0" stroke="#383838" stroke-width="0.25" stroke-opacity="1">Elbeuf</text>
<text x="355.8" y="344.6" font-size="8.5" fill="#a673b0" letter-spacing="0.2" stroke-width="2">Normandie</text>
<text x="389" y="348.1" font-size="9.3" fill="#383838" letter-spacing="0" stroke-width="2.4">Évreux</text>
<text x="389" y="348.1" font-size="9.3" fill="#383838" letter-spacing="0" stroke="#383838" stroke-width="0.25" stroke-opacity="1">Évreux</text>
<text x="308.8" y="359.0" font-size="9.3" fill="#383838" letter-spacing="0" stroke-width="2.4">Vire</text>
<text x="308.8" y="359.0" font-size="9.3" fill="#383838" letter-spacing="0" stroke="#383838" stroke-width="0.25" stroke-opacity="1">Vire</text>
<text x="343" y="364.7" font-size="9.3" fill="#383838" letter-spacing="0" stroke-width="2.4">Argentan</text>
<text x="343" y="364.7" font-size="9.3" fill="#383838" letter-spacing="0" stroke="#383838" stroke-width="0.25" stroke-opacity="1">Argentan</text>
<text x="398" y="364.7" font-size="9.3" fill="#383838" letter-spacing="0" stroke-width="2.4">Dreux</text>
<text x="398" y="364.7" font-size="9.3" fill="#383838" letter-spacing="0" stroke="#383838" stroke-width="0.25" stroke-opacity="1">Dreux</text>
<text x="347" y="382.9" font-size="9.3" fill="#383838" letter-spacing="0" stroke-width="2.4">Alençon</text>
<text x="347" y="382.9" font-size="9.3" fill="#383838" letter-spacing="0" stroke="#383838" stroke-width="0.25" stroke-opacity="1">Alençon</text>
<text x="403.4" y="382.4" font-size="9.3" fill="#383838" letter-spacing="0" stroke-width="2.4">Chartres</text>
<text x="403.4" y="382.4" font-size="9.3" fill="#383838" letter-spacing="0" stroke="#383838" stroke-width="0.25" stroke-opacity="1">Chartres</text>
<text x="313" y="404.8" font-size="9.3" fill="#383838" letter-spacing="0" stroke-width="2.4">Laval</text>
<text x="313" y="404.8" font-size="9.3" fill="#383838" letter-spacing="0" stroke="#383838" stroke-width="0.25" stroke-opacity="1">Laval</text>
<text x="351.7" y="402.5" font-size="9.8" fill="#383838" letter-spacing="0" stroke-width="2.4">Le Mans</text>
<text x="351.7" y="402.5" font-size="9.8" fill="#383838" letter-spacing="0" stroke="#383838" stroke-width="0.25" stroke-opacity="1">Le Mans</text>
<text x="386" y="421.7" font-size="9.3" fill="#383838" letter-spacing="0" stroke-width="2.4">Vendôme</text>
<text x="386" y="421.7" font-size="9.3" fill="#383838" letter-spacing="0" stroke="#383838" stroke-width="0.25" stroke-opacity="1">Vendôme</text>
<text x="420" y="408.5" font-size="9.8" fill="#383838" letter-spacing="0" stroke-width="2.4">Orléans</text>
<text x="420" y="408.5" font-size="9.8" fill="#383838" letter-spacing="0" stroke="#383838" stroke-width="0.25" stroke-opacity="1">Orléans</text>
<text x="413.5" y="432.4" font-size="8.5" fill="#a673b0" letter-spacing="0.2" stroke-width="2">Centre-Val</text>
<text x="413.5" y="440.1" font-size="8.5" fill="#a673b0" letter-spacing="0.2" stroke-width="2">de Loire</text>
<text x="322" y="434.5" font-size="9.8" fill="#383838" letter-spacing="0" stroke-width="2.4">Angers</text>
<text x="322" y="434.5" font-size="9.8" fill="#383838" letter-spacing="0" stroke="#383838" stroke-width="0.25" stroke-opacity="1">Angers</text>
<text x="370.5" y="439.5" font-size="9.8" fill="#383838" letter-spacing="0" stroke-width="2.4">Tours</text>
<text x="370.5" y="439.5" font-size="9.8" fill="#383838" letter-spacing="0" stroke="#383838" stroke-width="0.25" stroke-opacity="1">Tours</text>
<text x="354" y="459.4" font-size="9.3" fill="#383838" letter-spacing="0" stroke-width="2.4">Chinon</text>
<text x="354" y="459.4" font-size="9.3" fill="#383838" letter-spacing="0" stroke="#383838" stroke-width="0.25" stroke-opacity="1">Chinon</text>
<text x="435" y="462.9" font-size="9.3" fill="#383838" letter-spacing="0" stroke-width="2.4">Bourges</text>
<text x="435" y="462.9" font-size="9.3" fill="#383838" letter-spacing="0" stroke="#383838" stroke-width="0.25" stroke-opacity="1">Bourges</text>
<text x="449" y="427.4" font-size="9.3" fill="#383838" letter-spacing="0" stroke-width="2.4">Gien</text>
<text x="449" y="427.4" font-size="9.3" fill="#383838" letter-spacing="0" stroke="#383838" stroke-width="0.25" stroke-opacity="1">Gien</text>
<text x="453.6" y="410.1" font-size="9.3" fill="#383838" letter-spacing="0" stroke-width="2.4">Amilly</text>
<text x="453.6" y="410.1" font-size="9.3" fill="#383838" letter-spacing="0" stroke="#383838" stroke-width="0.25" stroke-opacity="1">Amilly</text>
<text x="474.6" y="397.4" font-size="9.3" fill="#383838" letter-spacing="0" stroke-width="2.4">Sens</text>
<text x="474.6" y="397.4" font-size="9.3" fill="#383838" letter-spacing="0" stroke="#383838" stroke-width="0.25" stroke-opacity="1">Sens</text>
<text x="487" y="421.7" font-size="9.3" fill="#383838" letter-spacing="0" stroke-width="2.4">Auxerre</text>
<text x="487" y="421.7" font-size="9.3" fill="#383838" letter-spacing="0" stroke="#383838" stroke-width="0.25" stroke-opacity="1">Auxerre</text>
<text x="499.7" y="439.9" font-size="9.3" fill="#383838" letter-spacing="0" stroke-width="2.4">Avallon</text>
<text x="499.7" y="439.9" font-size="9.3" fill="#383838" letter-spacing="0" stroke="#383838" stroke-width="0.25" stroke-opacity="1">Avallon</text>
<text x="544.5" y="443.2" font-size="9.8" fill="#383838" letter-spacing="0" stroke-width="2.4">Dijon</text>
<text x="544.5" y="443.2" font-size="9.8" fill="#383838" letter-spacing="0" stroke="#383838" stroke-width="0.25" stroke-opacity="1">Dijon</text>
<text x="573" y="447.5" font-size="9.8" fill="#383838" letter-spacing="0" stroke-width="2.4">Besançon</text>
<text x="573" y="447.5" font-size="9.8" fill="#383838" letter-spacing="0" stroke="#383838" stroke-width="0.25" stroke-opacity="1">Besançon</text>
<text x="549" y="402.9" font-size="9.3" fill="#383838" letter-spacing="0" stroke-width="2.4">Chaumont</text>
<text x="549" y="402.9" font-size="9.3" fill="#383838" letter-spacing="0" stroke="#383838" stroke-width="0.25" stroke-opacity="1">Chaumont</text>
<text x="552" y="417.4" font-size="9.3" fill="#383838" letter-spacing="0" stroke-width="2.4">Langres</text>
<text x="552" y="417.4" font-size="9.3" fill="#383838" letter-spacing="0" stroke="#383838" stroke-width="0.25" stroke-opacity="1">Langres</text>
<text x="541.4" y="371.0" font-size="9.3" fill="#383838" letter-spacing="0" stroke-width="2.4">St-Dizier</text>
<text x="541.4" y="371.0" font-size="9.3" fill="#383838" letter-spacing="0" stroke="#383838" stroke-width="0.25" stroke-opacity="1">St-Dizier</text>
<text x="517.9" y="347.4" font-size="9.3" fill="#383838" letter-spacing="0" stroke-width="2.4">Châlons-</text>
<text x="517.9" y="347.4" font-size="9.3" fill="#383838" letter-spacing="0" stroke="#383838" stroke-width="0.25" stroke-opacity="1">Châlons-</text>
<text x="517.9" y="356.2" font-size="9.3" fill="#383838" letter-spacing="0" stroke-width="2.4">en-Champagne</text>
<text x="517.9" y="356.2" font-size="9.3" fill="#383838" letter-spacing="0" stroke="#383838" stroke-width="0.25" stroke-opacity="1">en-Champagne</text>
<text x="531" y="324.9" font-size="9.3" fill="#383838" letter-spacing="0" stroke-width="2.4">Vouziers</text>
<text x="531" y="324.9" font-size="9.3" fill="#383838" letter-spacing="0" stroke="#383838" stroke-width="0.25" stroke-opacity="1">Vouziers</text>
<text x="488.4" y="313.9" font-size="9.3" fill="#383838" letter-spacing="0" stroke-width="2.4">Laon</text>
<text x="488.4" y="313.9" font-size="9.3" fill="#383838" letter-spacing="0" stroke="#383838" stroke-width="0.25" stroke-opacity="1">Laon</text>
<text x="440" y="325.4" font-size="9.3" fill="#383838" letter-spacing="0" stroke-width="2.4">Clermont</text>
<text x="440" y="325.4" font-size="9.3" fill="#383838" letter-spacing="0" stroke="#383838" stroke-width="0.25" stroke-opacity="1">Clermont</text>
<text x="447.3" y="336.4" font-size="9.3" fill="#383838" letter-spacing="0" stroke-width="2.4">Senlis</text>
<text x="447.3" y="336.4" font-size="9.3" fill="#383838" letter-spacing="0" stroke="#383838" stroke-width="0.25" stroke-opacity="1">Senlis</text>
<text x="438" y="351.7" font-size="10.8" fill="#383838" letter-spacing="0" stroke-width="2.4" font-weight="bold">Paris</text>
<text x="438" y="351.7" font-size="10.8" fill="#383838" letter-spacing="0" stroke="#383838" stroke-width="0.25" stroke-opacity="1" font-weight="bold">Paris</text>
<text x="450.5" y="376.4" font-size="9.3" fill="#383838" letter-spacing="0" stroke-width="2.4">Melun</text>
<text x="450.5" y="376.4" font-size="9.3" fill="#383838" letter-spacing="0" stroke="#383838" stroke-width="0.25" stroke-opacity="1">Melun</text>
<text x="434.8" y="287.5" font-size="9.8" fill="#383838" letter-spacing="0" stroke-width="2.4">Amiens</text>
<text x="434.8" y="287.5" font-size="9.8" fill="#383838" letter-spacing="0" stroke="#383838" stroke-width="0.25" stroke-opacity="1">Amiens</text>
<text x="475.5" y="290.5" font-size="9.8" fill="#383838" letter-spacing="0" stroke-width="2.4">St-Quentin</text>
<text x="475.5" y="290.5" font-size="9.8" fill="#383838" letter-spacing="0" stroke="#383838" stroke-width="0.25" stroke-opacity="1">St-Quentin</text>
<text x="472.4" y="269.2" font-size="9.8" fill="#383838" letter-spacing="0" stroke-width="2.4">Cambrai</text>
<text x="472.4" y="269.2" font-size="9.8" fill="#383838" letter-spacing="0" stroke="#383838" stroke-width="0.25" stroke-opacity="1">Cambrai</text>
<text x="454" y="262.3" font-size="9.8" fill="#383838" letter-spacing="0" stroke-width="2.4">Arras</text>
<text x="454" y="262.3" font-size="9.8" fill="#383838" letter-spacing="0" stroke="#383838" stroke-width="0.25" stroke-opacity="1">Arras</text>
<text x="479.6" y="280.0" font-size="9.3" fill="#383838" letter-spacing="0" stroke-width="2.4">Caudry</text>
<text x="479.6" y="280.0" font-size="9.3" fill="#383838" letter-spacing="0" stroke="#383838" stroke-width="0.25" stroke-opacity="1">Caudry</text>
<text x="521.3" y="271.4" font-size="9.3" fill="#383838" letter-spacing="0" stroke-width="2.4">Walcourt</text>
<text x="521.3" y="271.4" font-size="9.3" fill="#383838" letter-spacing="0" stroke="#383838" stroke-width="0.25" stroke-opacity="1">Walcourt</text>
<text x="523" y="284.1" font-size="9.3" fill="#383838" letter-spacing="0" stroke-width="2.4">Couvin</text>
<text x="523" y="284.1" font-size="9.3" fill="#383838" letter-spacing="0" stroke="#383838" stroke-width="0.25" stroke-opacity="1">Couvin</text>
<text x="500" y="297.4" font-size="9.3" fill="#383838" letter-spacing="0" stroke-width="2.4">Vervins</text>
<text x="500" y="297.4" font-size="9.3" fill="#383838" letter-spacing="0" stroke="#383838" stroke-width="0.25" stroke-opacity="1">Vervins</text>
<text x="453" y="254.9" font-size="9.3" fill="#383838" letter-spacing="0" stroke-width="2.4">Lens</text>
<text x="453" y="254.9" font-size="9.3" fill="#383838" letter-spacing="0" stroke="#383838" stroke-width="0.25" stroke-opacity="1">Lens</text>
<text x="507" y="254.4" font-size="9.3" fill="#383838" letter-spacing="0" stroke-width="2.4">Mons</text>
<text x="507" y="254.4" font-size="9.3" fill="#383838" letter-spacing="0" stroke="#383838" stroke-width="0.25" stroke-opacity="1">Mons</text>
<text x="601" y="254.4" font-size="9.3" fill="#383838" letter-spacing="0" stroke-width="2.4">Kall</text>
<text x="601" y="254.4" font-size="9.3" fill="#383838" letter-spacing="0" stroke="#383838" stroke-width="0.25" stroke-opacity="1">Kall</text>
<text x="790" y="279.4" font-size="9.3" fill="#555" letter-spacing="0" stroke-width="2.4">Bayreuth</text>
<text x="790" y="279.4" font-size="9.3" fill="#555" letter-spacing="0" stroke="#555" stroke-width="0.25" stroke-opacity="1">Bayreuth</text>
<text x="744" y="375.4" font-size="9.3" fill="#555" letter-spacing="0" stroke-width="2.4">Ulm</text>
<text x="744" y="375.4" font-size="9.3" fill="#555" letter-spacing="0" stroke="#555" stroke-width="0.25" stroke-opacity="1">Ulm</text>
<text x="772" y="396.4" font-size="9.3" fill="#555" letter-spacing="0" stroke-width="2.4">Landsberg</text>
<text x="772" y="396.4" font-size="9.3" fill="#555" letter-spacing="0" stroke="#555" stroke-width="0.25" stroke-opacity="1">Landsberg</text>
<text x="745" y="415.4" font-size="9.3" fill="#555" letter-spacing="0" stroke-width="2.4">Memmingen</text>
<text x="745" y="415.4" font-size="9.3" fill="#555" letter-spacing="0" stroke="#555" stroke-width="0.25" stroke-opacity="1">Memmingen</text>
<text x="547.6" y="257.2" font-size="9.3" fill="#383838" letter-spacing="0" stroke-width="2.4">Ardenne</text>
<text x="547.6" y="257.2" font-size="9.3" fill="#383838" letter-spacing="0" stroke="#383838" stroke-width="0.25" stroke-opacity="1">Ardenne</text>
<text x="577" y="257.2" font-size="9.3" fill="#383838" letter-spacing="0" stroke-width="2.4">Spa</text>
<text x="577" y="257.2" font-size="9.3" fill="#383838" letter-spacing="0" stroke="#383838" stroke-width="0.25" stroke-opacity="1">Spa</text>
<text x="640.3" y="259.0" font-size="9.3" fill="#3582ab" letter-spacing="0.2" stroke-opacity="0.25" stroke-width="1.5" font-style="italic">Loch</text>
<text x="690.4" y="259.7" font-size="9.3" fill="#383838" letter-spacing="0" stroke-width="2.4">Butzbach</text>
<text x="690.4" y="259.7" font-size="9.3" fill="#383838" letter-spacing="0" stroke="#383838" stroke-width="0.25" stroke-opacity="1">Butzbach</text>
<text x="773" y="260.4" font-size="9.3" fill="#383838" letter-spacing="0" stroke-width="2.4">Hildburghausen</text>
<text x="773" y="260.4" font-size="9.3" fill="#383838" letter-spacing="0" stroke="#383838" stroke-width="0.25" stroke-opacity="1">Hildburghausen</text>
<text x="854" y="265.9" font-size="9.3" fill="#383838" letter-spacing="0" stroke-width="2.4">Carlsb</text>
<text x="854" y="265.9" font-size="9.3" fill="#383838" letter-spacing="0" stroke="#383838" stroke-width="0.25" stroke-opacity="1">Carlsb</text>
<text x="673.5" y="276.1" font-size="9.8" fill="#383838" letter-spacing="0" stroke-width="2.4">Wiesbaden</text>
<text x="673.5" y="276.1" font-size="9.8" fill="#383838" letter-spacing="0" stroke="#383838" stroke-width="0.25" stroke-opacity="1">Wiesbaden</text>
<text x="689.8" y="288.0" font-size="9.8" fill="#383838" letter-spacing="0" stroke-width="2.4">Darmstadt</text>
<text x="689.8" y="288.0" font-size="9.8" fill="#383838" letter-spacing="0" stroke="#383838" stroke-width="0.25" stroke-opacity="1">Darmstadt</text>
<text x="584.8" y="284.1" font-size="9.3" fill="#383838" letter-spacing="0" stroke-width="2.4">Clervaux</text>
<text x="584.8" y="284.1" font-size="9.3" fill="#383838" letter-spacing="0" stroke="#383838" stroke-width="0.25" stroke-opacity="1">Clervaux</text>
<text x="635.9" y="285.4" font-size="8.5" fill="#a673b0" letter-spacing="0.2" stroke-width="2">Rhénanie-</text>
<text x="635.9" y="293.9" font-size="8.5" fill="#a673b0" letter-spacing="0.2" stroke-width="2">Palatinat</text>
<text x="710" y="295.4" font-size="9.3" fill="#3582ab" letter-spacing="0.2" stroke-opacity="0.25" stroke-width="1.5" font-style="italic">Kleine</text>
<text x="710" y="304.4" font-size="9.3" fill="#3582ab" letter-spacing="0.2" stroke-opacity="0.25" stroke-width="1.5" font-style="italic">Bucht</text>
<text x="588.9" y="304.9" font-size="10.8" fill="#383838" letter-spacing="0" stroke-width="2.4" font-weight="bold">Luxembourg</text>
<text x="588.9" y="304.9" font-size="10.8" fill="#383838" letter-spacing="0" stroke="#383838" stroke-width="0.25" stroke-opacity="1" font-weight="bold">Luxembourg</text>
<text x="619.3" y="316.1" font-size="9.3" fill="#383838" letter-spacing="0" stroke-width="2.4">Wadern</text>
<text x="619.3" y="316.1" font-size="9.3" fill="#383838" letter-spacing="0" stroke="#383838" stroke-width="0.25" stroke-opacity="1">Wadern</text>
<text x="573.8" y="317.7" font-size="9.3" fill="#383838" letter-spacing="0" stroke-width="2.4">Longwy</text>
<text x="573.8" y="317.7" font-size="9.3" fill="#383838" letter-spacing="0" stroke="#383838" stroke-width="0.25" stroke-opacity="1">Longwy</text>
<text x="682.6" y="312.1" font-size="9.8" fill="#383838" letter-spacing="0" stroke-width="2.4">Mannheim</text>
<text x="682.6" y="312.1" font-size="9.8" fill="#383838" letter-spacing="0" stroke="#383838" stroke-width="0.25" stroke-opacity="1">Mannheim</text>
<text x="623.3" y="327.8" font-size="9.8" fill="#383838" letter-spacing="0" stroke-width="2.4">Sarrebruck</text>
<text x="623.3" y="327.8" font-size="9.8" fill="#383838" letter-spacing="0" stroke="#383838" stroke-width="0.25" stroke-opacity="1">Sarrebruck</text>
<text x="590" y="335.0" font-size="9.8" fill="#383838" letter-spacing="0" stroke-width="2.4">Metz</text>
<text x="590" y="335.0" font-size="9.8" fill="#383838" letter-spacing="0" stroke="#383838" stroke-width="0.25" stroke-opacity="1">Metz</text>
<text x="590" y="345.2" font-size="9.3" fill="#383838" letter-spacing="0" stroke-width="2.4">Marly</text>
<text x="590" y="345.2" font-size="9.3" fill="#383838" letter-spacing="0" stroke="#383838" stroke-width="0.25" stroke-opacity="1">Marly</text>
<text x="640.3" y="345.9" font-size="9.3" fill="#383838" letter-spacing="0" stroke-width="2.4">Bitche</text>
<text x="640.3" y="345.9" font-size="9.3" fill="#383838" letter-spacing="0" stroke="#383838" stroke-width="0.25" stroke-opacity="1">Bitche</text>
<text x="679.8" y="341.3" font-size="9.8" fill="#383838" letter-spacing="0" stroke-width="2.4">Karlsruhe</text>
<text x="679.8" y="341.3" font-size="9.8" fill="#383838" letter-spacing="0" stroke="#383838" stroke-width="0.25" stroke-opacity="1">Karlsruhe</text>
<text x="691.4" y="349.1" font-size="9.8" fill="#383838" letter-spacing="0" stroke-width="2.4">Pforzheim</text>
<text x="691.4" y="349.1" font-size="9.8" fill="#383838" letter-spacing="0" stroke="#383838" stroke-width="0.25" stroke-opacity="1">Pforzheim</text>
<text x="708.6" y="333.5" font-size="9.8" fill="#383838" letter-spacing="0" stroke-width="2.4">Heilbronn</text>
<text x="708.6" y="333.5" font-size="9.8" fill="#383838" letter-spacing="0" stroke="#383838" stroke-width="0.25" stroke-opacity="1">Heilbronn</text>
<text x="710.2" y="356.0" font-size="9.8" fill="#383838" letter-spacing="0" stroke-width="2.4">Stuttgart</text>
<text x="710.2" y="356.0" font-size="9.8" fill="#383838" letter-spacing="0" stroke="#383838" stroke-width="0.25" stroke-opacity="1">Stuttgart</text>
<text x="590" y="361.0" font-size="9.8" fill="#383838" letter-spacing="0" stroke-width="2.4">Nancy</text>
<text x="590" y="361.0" font-size="9.8" fill="#383838" letter-spacing="0" stroke="#383838" stroke-width="0.25" stroke-opacity="1">Nancy</text>
<text x="653.7" y="367.0" font-size="9.8" fill="#383838" letter-spacing="0" stroke-width="2.4">Strasbourg</text>
<text x="653.7" y="367.0" font-size="9.8" fill="#383838" letter-spacing="0" stroke="#383838" stroke-width="0.25" stroke-opacity="1">Strasbourg</text>
<text x="693" y="366.3" font-size="9.3" fill="#383838" letter-spacing="0" stroke-width="2.4">Calw</text>
<text x="693" y="366.3" font-size="9.3" fill="#383838" letter-spacing="0" stroke="#383838" stroke-width="0.25" stroke-opacity="1">Calw</text>
<text x="588" y="380.1" font-size="8.5" fill="#a673b0" letter-spacing="0.2" stroke-width="2">Grand Est</text>
<text x="650.6" y="383.4" font-size="9.3" fill="#383838" letter-spacing="0" stroke-width="2.4">Erstein</text>
<text x="650.6" y="383.4" font-size="9.3" fill="#383838" letter-spacing="0" stroke="#383838" stroke-width="0.25" stroke-opacity="1">Erstein</text>
<text x="700.8" y="378.2" font-size="9.3" fill="#383838" letter-spacing="0" stroke-width="2.4">Tübingen</text>
<text x="700.8" y="378.2" font-size="9.3" fill="#383838" letter-spacing="0" stroke="#383838" stroke-width="0.25" stroke-opacity="1">Tübingen</text>
<text x="656.9" y="403.3" font-size="9.8" fill="#383838" letter-spacing="0" stroke-width="2.4">Fribourg-en-Brisgau</text>
<text x="656.9" y="403.3" font-size="9.8" fill="#383838" letter-spacing="0" stroke="#383838" stroke-width="0.25" stroke-opacity="1">Fribourg-en-Brisgau</text>
<text x="624" y="417.5" font-size="9.8" fill="#383838" letter-spacing="0" stroke-width="2.4">Mulhouse</text>
<text x="624" y="417.5" font-size="9.8" fill="#383838" letter-spacing="0" stroke="#383838" stroke-width="0.25" stroke-opacity="1">Mulhouse</text>
<text x="617.7" y="431.1" font-size="9.3" fill="#383838" letter-spacing="0" stroke-width="2.4">Belfort</text>
<text x="617.7" y="431.1" font-size="9.3" fill="#383838" letter-spacing="0" stroke="#383838" stroke-width="0.25" stroke-opacity="1">Belfort</text>
<text x="689.8" y="426.5" font-size="8.5" fill="#a673b0" letter-spacing="0.2" stroke-width="2">Schaffhouse</text>
<text x="701" y="433.6" font-size="8.5" fill="#a673b0" letter-spacing="0.2" stroke-width="2">Thurgovie</text>
<text x="646" y="433.9" font-size="8.1" fill="#a673b0" letter-spacing="0.2" stroke-width="2">Bâle-Ville</text>
<text x="685" y="440.0" font-size="9.8" fill="#383838" letter-spacing="0" stroke-width="2.4">Zurich</text>
<text x="685" y="440.0" font-size="9.8" fill="#383838" letter-spacing="0" stroke="#383838" stroke-width="0.25" stroke-opacity="1">Zurich</text>
<text x="717.4" y="443.7" font-size="9.3" fill="#383838" letter-spacing="0" stroke-width="2.4">St-Gall</text>
<text x="717.4" y="443.7" font-size="9.3" fill="#383838" letter-spacing="0" stroke="#383838" stroke-width="0.25" stroke-opacity="1">St-Gall</text>
<text x="630" y="448.1" font-size="8.5" fill="#a673b0" letter-spacing="0.2" stroke-width="2">Jura</text>
<text x="664" y="448.4" font-size="9.3" fill="#3582ab" letter-spacing="0.2" stroke-opacity="0.25" stroke-width="1.5" font-style="italic">Chessiloch</text>
<text x="799.5" y="445.5" font-size="9.8" fill="#383838" letter-spacing="0" stroke-width="2.4">Innsbruck</text>
<text x="799.5" y="445.5" font-size="9.8" fill="#383838" letter-spacing="0" stroke="#383838" stroke-width="0.25" stroke-opacity="1">Innsbruck</text>
<text x="811" y="392.9" font-size="9.3" fill="#555" letter-spacing="0" stroke-width="2.4">Munich</text>
<text x="811" y="392.9" font-size="9.3" fill="#555" letter-spacing="0" stroke="#555" stroke-width="0.25" stroke-opacity="1">Munich</text>
<text x="829.3" y="377.2" font-size="9.3" fill="#555" letter-spacing="0" stroke-width="2.4">Landshut</text>
<text x="829.3" y="377.2" font-size="9.3" fill="#555" letter-spacing="0" stroke="#555" stroke-width="0.25" stroke-opacity="1">Landshut</text>
<text x="847" y="356.9" font-size="9.3" fill="#555" letter-spacing="0" stroke-width="2.4">Straubing</text>
<text x="847" y="356.9" font-size="9.3" fill="#555" letter-spacing="0" stroke="#555" stroke-width="0.25" stroke-opacity="1">Straubing</text>
<text x="848" y="396.0" font-size="9.3" fill="#555" letter-spacing="0" stroke-width="2.4">Altötting</text>
<text x="848" y="396.0" font-size="9.3" fill="#555" letter-spacing="0" stroke="#555" stroke-width="0.25" stroke-opacity="1">Altötting</text>
<text x="848" y="335.4" font-size="9.3" fill="#555" letter-spacing="0" stroke-width="2.4">Cham</text>
<text x="848" y="335.4" font-size="9.3" fill="#555" letter-spacing="0" stroke="#555" stroke-width="0.25" stroke-opacity="1">Cham</text>
<text x="860" y="414.9" font-size="9.3" fill="#383838" letter-spacing="0" stroke-width="2.4">Salzb</text>
<text x="860" y="414.9" font-size="9.3" fill="#383838" letter-spacing="0" stroke="#383838" stroke-width="0.25" stroke-opacity="1">Salzb</text>
<text x="784" y="314.4" font-size="9.3" fill="#555" letter-spacing="0" stroke-width="2.4">Nuremberg</text>
<text x="784" y="314.4" font-size="9.3" fill="#555" letter-spacing="0" stroke="#555" stroke-width="0.25" stroke-opacity="1">Nuremberg</text>
<text x="776" y="300.4" font-size="9.3" fill="#555" letter-spacing="0" stroke-width="2.4">Erlangen</text>
<text x="776" y="300.4" font-size="9.3" fill="#555" letter-spacing="0" stroke="#555" stroke-width="0.25" stroke-opacity="1">Erlangen</text>
<text x="846" y="279.2" font-size="9.3" fill="#555" letter-spacing="0" stroke-width="2.4">Egra</text>
<text x="846" y="279.2" font-size="9.3" fill="#555" letter-spacing="0" stroke="#555" stroke-width="0.25" stroke-opacity="1">Egra</text>
<text x="826" y="265.9" font-size="9.3" fill="#555" letter-spacing="0" stroke-width="2.4">Hof</text>
<text x="826" y="265.9" font-size="9.3" fill="#555" letter-spacing="0" stroke="#555" stroke-width="0.25" stroke-opacity="1">Hof</text>
<text x="812" y="296.4" font-size="9.3" fill="#555" letter-spacing="0" stroke-width="2.4">Erbendorf</text>
<text x="812" y="296.4" font-size="9.3" fill="#555" letter-spacing="0" stroke="#555" stroke-width="0.25" stroke-opacity="1">Erbendorf</text>
<text x="778" y="344.4" font-size="9.3" fill="#555" letter-spacing="0" stroke-width="2.4">Dinkelsbühl</text>
<text x="778" y="344.4" font-size="9.3" fill="#555" letter-spacing="0" stroke="#555" stroke-width="0.25" stroke-opacity="1">Dinkelsbühl</text>
<text x="767" y="330.4" font-size="9.3" fill="#555" letter-spacing="0" stroke-width="2.4">Ansbach</text>
<text x="767" y="330.4" font-size="9.3" fill="#555" letter-spacing="0" stroke="#555" stroke-width="0.25" stroke-opacity="1">Ansbach</text>
<text x="762" y="358.4" font-size="9.3" fill="#555" letter-spacing="0" stroke-width="2.4">Aalen</text>
<text x="762" y="358.4" font-size="9.3" fill="#555" letter-spacing="0" stroke="#555" stroke-width="0.25" stroke-opacity="1">Aalen</text>
<text x="806" y="408.4" font-size="9.3" fill="#555" letter-spacing="0" stroke-width="2.4">Gauting</text>
<text x="806" y="408.4" font-size="9.3" fill="#555" letter-spacing="0" stroke="#555" stroke-width="0.25" stroke-opacity="1">Gauting</text>
<text x="810" y="420.4" font-size="9.3" fill="#555" letter-spacing="0" stroke-width="2.4">Bad</text>
<text x="810" y="420.4" font-size="9.3" fill="#555" letter-spacing="0" stroke="#555" stroke-width="0.25" stroke-opacity="1">Bad</text>
<text x="768" y="435.4" font-size="9.3" fill="#555" letter-spacing="0" stroke-width="2.4">Füssen</text>
<text x="768" y="435.4" font-size="9.3" fill="#555" letter-spacing="0" stroke="#555" stroke-width="0.25" stroke-opacity="1">Füssen</text>
<text x="308.7" y="465.4" font-size="9.3" fill="#383838" letter-spacing="0" stroke-width="2.4">Cholet</text>
<text x="308.7" y="465.4" font-size="9.3" fill="#383838" letter-spacing="0" stroke="#383838" stroke-width="0.25" stroke-opacity="1">Cholet</text>
<text x="515.5" y="471.4" font-size="9.3" fill="#383838" letter-spacing="0" stroke-width="2.4">Autun</text>
<text x="515.5" y="471.4" font-size="9.3" fill="#383838" letter-spacing="0" stroke="#383838" stroke-width="0.25" stroke-opacity="1">Autun</text>
<text x="562" y="463.4" font-size="9.3" fill="#383838" letter-spacing="0" stroke-width="2.4">Dole</text>
<text x="562" y="463.4" font-size="9.3" fill="#383838" letter-spacing="0" stroke="#383838" stroke-width="0.25" stroke-opacity="1">Dole</text>
<text x="286.4" y="483.9" font-size="9.3" fill="#383838" letter-spacing="0" stroke-width="2.4">La Roche-</text>
<text x="286.4" y="483.9" font-size="9.3" fill="#383838" letter-spacing="0" stroke="#383838" stroke-width="0.25" stroke-opacity="1">La Roche-</text>
<text x="286.4" y="492.8" font-size="9.3" fill="#383838" letter-spacing="0" stroke-width="2.4">sur-Yon</text>
<text x="286.4" y="492.8" font-size="9.3" fill="#383838" letter-spacing="0" stroke="#383838" stroke-width="0.25" stroke-opacity="1">sur-Yon</text>
<text x="357" y="487.0" font-size="9.8" fill="#383838" letter-spacing="0" stroke-width="2.4">Poitiers</text>
<text x="357" y="487.0" font-size="9.8" fill="#383838" letter-spacing="0" stroke="#383838" stroke-width="0.25" stroke-opacity="1">Poitiers</text>
<text x="411" y="480.6" font-size="9.3" fill="#383838" letter-spacing="0" stroke-width="2.4">Châteauroux</text>
<text x="411" y="480.6" font-size="9.3" fill="#383838" letter-spacing="0" stroke="#383838" stroke-width="0.25" stroke-opacity="1">Châteauroux</text>
<text x="477.4" y="494.4" font-size="9.3" fill="#383838" letter-spacing="0" stroke-width="2.4">Moulins</text>
<text x="477.4" y="494.4" font-size="9.3" fill="#383838" letter-spacing="0" stroke="#383838" stroke-width="0.25" stroke-opacity="1">Moulins</text>
<text x="518.8" y="490.2" font-size="9.3" fill="#383838" letter-spacing="0" stroke-width="2.4">St-Vallier</text>
<text x="518.8" y="490.2" font-size="9.3" fill="#383838" letter-spacing="0" stroke="#383838" stroke-width="0.25" stroke-opacity="1">St-Vallier</text>
<text x="562" y="482.9" font-size="9.3" fill="#383838" letter-spacing="0" stroke-width="2.4">Lons-</text>
<text x="562" y="482.9" font-size="9.3" fill="#383838" letter-spacing="0" stroke="#383838" stroke-width="0.25" stroke-opacity="1">Lons-</text>
<text x="562" y="491.8" font-size="9.3" fill="#383838" letter-spacing="0" stroke-width="2.4">le-Saunier</text>
<text x="562" y="491.8" font-size="9.3" fill="#383838" letter-spacing="0" stroke="#383838" stroke-width="0.25" stroke-opacity="1">le-Saunier</text>
<text x="379" y="502.6" font-size="9.3" fill="#383838" letter-spacing="0" stroke-width="2.4">Montmorillon</text>
<text x="379" y="502.6" font-size="9.3" fill="#383838" letter-spacing="0" stroke="#383838" stroke-width="0.25" stroke-opacity="1">Montmorillon</text>
<text x="448.2" y="506.9" font-size="9.3" fill="#383838" letter-spacing="0" stroke-width="2.4">Montluçon</text>
<text x="448.2" y="506.9" font-size="9.3" fill="#383838" letter-spacing="0" stroke="#383838" stroke-width="0.25" stroke-opacity="1">Montluçon</text>
<text x="298.6" y="517.4" font-size="9.3" fill="#383838" letter-spacing="0" stroke-width="2.4">La Rochelle</text>
<text x="298.6" y="517.4" font-size="9.3" fill="#383838" letter-spacing="0" stroke="#383838" stroke-width="0.25" stroke-opacity="1">La Rochelle</text>
<text x="335" y="514.1" font-size="9.3" fill="#383838" letter-spacing="0" stroke-width="2.4">Mell</text>
<text x="335" y="514.1" font-size="9.3" fill="#383838" letter-spacing="0" stroke="#383838" stroke-width="0.25" stroke-opacity="1">Mell</text>
<text x="480" y="519.7" font-size="9.3" fill="#383838" letter-spacing="0" stroke-width="2.4">Vichy</text>
<text x="480" y="519.7" font-size="9.3" fill="#383838" letter-spacing="0" stroke="#383838" stroke-width="0.25" stroke-opacity="1">Vichy</text>
<text x="305.4" y="530.4" font-size="9.3" fill="#383838" letter-spacing="0" stroke-width="2.4">Rochefort</text>
<text x="305.4" y="530.4" font-size="9.3" fill="#383838" letter-spacing="0" stroke="#383838" stroke-width="0.25" stroke-opacity="1">Rochefort</text>
<text x="394.7" y="530.5" font-size="9.8" fill="#383838" letter-spacing="0" stroke-width="2.4">Limoges</text>
<text x="394.7" y="530.5" font-size="9.8" fill="#383838" letter-spacing="0" stroke="#383838" stroke-width="0.25" stroke-opacity="1">Limoges</text>
<text x="466.3" y="532.3" font-size="9.8" fill="#383838" letter-spacing="0" stroke-width="2.4">Clermont-Ferrand</text>
<text x="466.3" y="532.3" font-size="9.8" fill="#383838" letter-spacing="0" stroke="#383838" stroke-width="0.25" stroke-opacity="1">Clermont-Ferrand</text>
<text x="292.3" y="541.6" font-size="8.3" fill="#555" letter-spacing="0" stroke-width="2.4" font-style="italic">Île d'Oléron</text>
<text x="292.3" y="541.6" font-size="8.3" fill="#555" letter-spacing="0" stroke="#555" stroke-width="0.25" stroke-opacity="1" font-style="italic">Île d'Oléron</text>
<text x="535.8" y="533.9" font-size="9.8" fill="#383838" letter-spacing="0" stroke-width="2.4">Lyon</text>
<text x="535.8" y="533.9" font-size="9.8" fill="#383838" letter-spacing="0" stroke="#383838" stroke-width="0.25" stroke-opacity="1">Lyon</text>
<text x="350.4" y="547.6" font-size="9.3" fill="#383838" letter-spacing="0" stroke-width="2.4">Angoulême</text>
<text x="350.4" y="547.6" font-size="9.3" fill="#383838" letter-spacing="0" stroke="#383838" stroke-width="0.25" stroke-opacity="1">Angoulême</text>
<text x="448" y="552.4" font-size="9.3" fill="#383838" letter-spacing="0" stroke-width="2.4">Ussel</text>
<text x="448" y="552.4" font-size="9.3" fill="#383838" letter-spacing="0" stroke="#383838" stroke-width="0.25" stroke-opacity="1">Ussel</text>
<text x="476" y="552.4" font-size="9.3" fill="#383838" letter-spacing="0" stroke-width="2.4">Issoire</text>
<text x="476" y="552.4" font-size="9.3" fill="#383838" letter-spacing="0" stroke="#383838" stroke-width="0.25" stroke-opacity="1">Issoire</text>
<text x="519.4" y="552.0" font-size="9.8" fill="#383838" letter-spacing="0" stroke-width="2.4">St-Étienne</text>
<text x="519.4" y="552.0" font-size="9.8" fill="#383838" letter-spacing="0" stroke="#383838" stroke-width="0.25" stroke-opacity="1">St-Étienne</text>
<text x="358.6" y="557.5" font-size="8.5" fill="#a673b0" letter-spacing="0.2" stroke-width="2">Nouvelle-</text>
<text x="358.6" y="565.3" font-size="8.5" fill="#a673b0" letter-spacing="0.2" stroke-width="2">Aquitaine</text>
<text x="314.3" y="567.6" font-size="9.3" fill="#3582ab" letter-spacing="0.2" stroke-opacity="0.25" stroke-width="1.5" font-style="italic">La Gironde</text>
<text x="372.7" y="573.2" font-size="9.3" fill="#383838" letter-spacing="0" stroke-width="2.4">Périgueux</text>
<text x="372.7" y="573.2" font-size="9.3" fill="#383838" letter-spacing="0" stroke="#383838" stroke-width="0.25" stroke-opacity="1">Périgueux</text>
<text x="415" y="568.3" font-size="9.3" fill="#383838" letter-spacing="0" stroke-width="2.4">Tulle</text>
<text x="415" y="568.3" font-size="9.3" fill="#383838" letter-spacing="0" stroke="#383838" stroke-width="0.25" stroke-opacity="1">Tulle</text>
<text x="498.8" y="577.1" font-size="9.3" fill="#383838" letter-spacing="0" stroke-width="2.4">Le Puy-</text>
<text x="498.8" y="577.1" font-size="9.3" fill="#383838" letter-spacing="0" stroke="#383838" stroke-width="0.25" stroke-opacity="1">Le Puy-</text>
<text x="498.8" y="586.4" font-size="9.3" fill="#383838" letter-spacing="0" stroke-width="2.4">en-Velay</text>
<text x="498.8" y="586.4" font-size="9.3" fill="#383838" letter-spacing="0" stroke="#383838" stroke-width="0.25" stroke-opacity="1">en-Velay</text>
<text x="539" y="580.8" font-size="9.8" fill="#383838" letter-spacing="0" stroke-width="2.4">Valence</text>
<text x="539" y="580.8" font-size="9.8" fill="#383838" letter-spacing="0" stroke="#383838" stroke-width="0.25" stroke-opacity="1">Valence</text>
<text x="320.9" y="586.5" font-size="9.8" fill="#383838" letter-spacing="0" stroke-width="2.4">Bordeaux</text>
<text x="320.9" y="586.5" font-size="9.8" fill="#383838" letter-spacing="0" stroke="#383838" stroke-width="0.25" stroke-opacity="1">Bordeaux</text>
<text x="441.3" y="587.4" font-size="9.3" fill="#383838" letter-spacing="0" stroke-width="2.4">Aurillac</text>
<text x="441.3" y="587.4" font-size="9.3" fill="#383838" letter-spacing="0" stroke="#383838" stroke-width="0.25" stroke-opacity="1">Aurillac</text>
<text x="399" y="598.8" font-size="9.3" fill="#383838" letter-spacing="0" stroke-width="2.4">Gourdon</text>
<text x="399" y="598.8" font-size="9.3" fill="#383838" letter-spacing="0" stroke="#383838" stroke-width="0.25" stroke-opacity="1">Gourdon</text>
<text x="297.2" y="602.1" font-size="9.3" fill="#383838" letter-spacing="0" stroke-width="2.4">Arcachon</text>
<text x="297.2" y="602.1" font-size="9.3" fill="#383838" letter-spacing="0" stroke="#383838" stroke-width="0.25" stroke-opacity="1">Arcachon</text>
<text x="350.4" y="612.6" font-size="9.3" fill="#383838" letter-spacing="0" stroke-width="2.4">Marmande</text>
<text x="350.4" y="612.6" font-size="9.3" fill="#383838" letter-spacing="0" stroke="#383838" stroke-width="0.25" stroke-opacity="1">Marmande</text>
<text x="401.3" y="614.9" font-size="9.3" fill="#383838" letter-spacing="0" stroke-width="2.4">Cahors</text>
<text x="401.3" y="614.9" font-size="9.3" fill="#383838" letter-spacing="0" stroke="#383838" stroke-width="0.25" stroke-opacity="1">Cahors</text>
<text x="483.3" y="611.3" font-size="9.3" fill="#383838" letter-spacing="0" stroke-width="2.4">Mende</text>
<text x="483.3" y="611.3" font-size="9.3" fill="#383838" letter-spacing="0" stroke="#383838" stroke-width="0.25" stroke-opacity="1">Mende</text>
<text x="533.5" y="609.0" font-size="9.3" fill="#383838" letter-spacing="0" stroke-width="2.4">Montélimar</text>
<text x="533.5" y="609.0" font-size="9.3" fill="#383838" letter-spacing="0" stroke="#383838" stroke-width="0.25" stroke-opacity="1">Montélimar</text>
<text x="446.6" y="620.1" font-size="9.3" fill="#383838" letter-spacing="0" stroke-width="2.4">Rodez</text>
<text x="446.6" y="620.1" font-size="9.3" fill="#383838" letter-spacing="0" stroke="#383838" stroke-width="0.25" stroke-opacity="1">Rodez</text>
<text x="294.6" y="628.4" font-size="9.3" fill="#383838" letter-spacing="0" stroke-width="2.4">Mimizan</text>
<text x="294.6" y="628.4" font-size="9.3" fill="#383838" letter-spacing="0" stroke="#383838" stroke-width="0.25" stroke-opacity="1">Mimizan</text>
<text x="467" y="633.9" font-size="9.3" fill="#383838" letter-spacing="0" stroke-width="2.4">Millau</text>
<text x="467" y="633.9" font-size="9.3" fill="#383838" letter-spacing="0" stroke="#383838" stroke-width="0.25" stroke-opacity="1">Millau</text>
<text x="529.3" y="635.5" font-size="9.8" fill="#383838" letter-spacing="0" stroke-width="2.4">Avignon</text>
<text x="529.3" y="635.5" font-size="9.8" fill="#383838" letter-spacing="0" stroke="#383838" stroke-width="0.25" stroke-opacity="1">Avignon</text>
<text x="323.5" y="641.1" font-size="9.3" fill="#383838" letter-spacing="0" stroke-width="2.4">Mont-</text>
<text x="323.5" y="641.1" font-size="9.3" fill="#383838" letter-spacing="0" stroke="#383838" stroke-width="0.25" stroke-opacity="1">Mont-</text>
<text x="323.5" y="650.4" font-size="9.3" fill="#383838" letter-spacing="0" stroke-width="2.4">de-Marsan</text>
<text x="323.5" y="650.4" font-size="9.3" fill="#383838" letter-spacing="0" stroke="#383838" stroke-width="0.25" stroke-opacity="1">de-Marsan</text>
<text x="398" y="638.8" font-size="9.3" fill="#383838" letter-spacing="0" stroke-width="2.4">Montauban</text>
<text x="398" y="638.8" font-size="9.3" fill="#383838" letter-spacing="0" stroke="#383838" stroke-width="0.25" stroke-opacity="1">Montauban</text>
<text x="401.3" y="654.4" font-size="9.8" fill="#383838" letter-spacing="0" stroke-width="2.4">Toulouse</text>
<text x="401.3" y="654.4" font-size="9.8" fill="#383838" letter-spacing="0" stroke="#383838" stroke-width="0.25" stroke-opacity="1">Toulouse</text>
<text x="498" y="654.4" font-size="9.8" fill="#383838" letter-spacing="0" stroke-width="2.4">Montpellier</text>
<text x="498" y="654.4" font-size="9.8" fill="#383838" letter-spacing="0" stroke="#383838" stroke-width="0.25" stroke-opacity="1">Montpellier</text>
<text x="367.8" y="659.4" font-size="9.3" fill="#383838" letter-spacing="0" stroke-width="2.4">Auch</text>
<text x="367.8" y="659.4" font-size="9.3" fill="#383838" letter-spacing="0" stroke="#383838" stroke-width="0.25" stroke-opacity="1">Auch</text>
<text x="396" y="668.4" font-size="9.3" fill="#383838" letter-spacing="0" stroke-width="2.4">Muret</text>
<text x="396" y="668.4" font-size="9.3" fill="#383838" letter-spacing="0" stroke="#383838" stroke-width="0.25" stroke-opacity="1">Muret</text>
<text x="330" y="669.4" font-size="9.3" fill="#383838" letter-spacing="0" stroke-width="2.4">Pau</text>
<text x="330" y="669.4" font-size="9.3" fill="#383838" letter-spacing="0" stroke="#383838" stroke-width="0.25" stroke-opacity="1">Pau</text>
<text x="195.8" y="540.5" font-size="12.7" fill="#3582ab" letter-spacing="0.2" stroke-opacity="0.25" stroke-width="1.5" font-style="italic">Golfe</text>
<text x="195.8" y="554.9" font-size="12.7" fill="#3582ab" letter-spacing="0.2" stroke-opacity="0.25" stroke-width="1.5" font-style="italic">de Gascogne</text>
<text x="191" y="662.5" font-size="9.8" fill="#383838" letter-spacing="0" stroke-width="2.4">Santander</text>
<text x="191" y="662.5" font-size="9.8" fill="#383838" letter-spacing="0" stroke="#383838" stroke-width="0.25" stroke-opacity="1">Santander</text>
<text x="117.4" y="658.5" font-size="9.8" fill="#383838" letter-spacing="0" stroke-width="2.4">Gijon</text>
<text x="117.4" y="658.5" font-size="9.8" fill="#383838" letter-spacing="0" stroke="#383838" stroke-width="0.25" stroke-opacity="1">Gijon</text>
<text x="109.6" y="668.8" font-size="9.8" fill="#383838" letter-spacing="0" stroke-width="2.4">Oviède</text>
<text x="109.6" y="668.8" font-size="9.8" fill="#383838" letter-spacing="0" stroke="#383838" stroke-width="0.25" stroke-opacity="1">Oviède</text>
<text x="264.8" y="669.5" font-size="9.8" fill="#383838" letter-spacing="0" stroke-width="2.4">St-Sébastien</text>
<text x="264.8" y="669.5" font-size="9.8" fill="#383838" letter-spacing="0" stroke="#383838" stroke-width="0.25" stroke-opacity="1">St-Sébastien</text>
<text x="641.5" y="465.2" font-size="10.8" fill="#383838" letter-spacing="0" stroke-width="2.4" font-weight="bold">Berne</text>
<text x="641.5" y="465.2" font-size="10.8" fill="#383838" letter-spacing="0" stroke="#383838" stroke-width="0.25" stroke-opacity="1" font-weight="bold">Berne</text>
<text x="724.2" y="459.9" font-size="9.8" fill="#383838" letter-spacing="0" stroke-width="2.4" font-weight="bold">Vaduz</text>
<text x="724.2" y="459.9" font-size="9.8" fill="#383838" letter-spacing="0" stroke="#383838" stroke-width="0.25" stroke-opacity="1" font-weight="bold">Vaduz</text>
<text x="783.3" y="470.6" font-size="9.3" fill="#383838" letter-spacing="0" stroke-width="2.4">Sölden</text>
<text x="783.3" y="470.6" font-size="9.3" fill="#383838" letter-spacing="0" stroke="#383838" stroke-width="0.25" stroke-opacity="1">Sölden</text>
<text x="853.9" y="477.9" font-size="9.3" fill="#383838" letter-spacing="0" stroke-width="2.4">Lienz</text>
<text x="853.9" y="477.9" font-size="9.3" fill="#383838" letter-spacing="0" stroke="#383838" stroke-width="0.25" stroke-opacity="1">Lienz</text>
<text x="798" y="491.1" font-size="9.8" fill="#383838" letter-spacing="0" stroke-width="2.4">Bolzano</text>
<text x="798" y="491.1" font-size="9.8" fill="#383838" letter-spacing="0" stroke="#383838" stroke-width="0.25" stroke-opacity="1">Bolzano</text>
<text x="794.8" y="497.3" font-size="8.5" fill="#a673b0" letter-spacing="0.2" stroke-width="2">Trentin-</text>
<text x="794.8" y="504.8" font-size="8.5" fill="#a673b0" letter-spacing="0.2" stroke-width="2">Haut-Adige</text>
<text x="727.5" y="485.8" font-size="8.5" fill="#a673b0" letter-spacing="0.2" stroke-width="2">Grisons</text>
<text x="732.5" y="504.1" font-size="9.3" fill="#3582ab" letter-spacing="0.2" stroke-opacity="0.25" stroke-width="1.5" font-style="italic">Lej Giadina</text>
<text x="589.7" y="508.5" font-size="9.8" fill="#383838" letter-spacing="0" stroke-width="2.4">Genève</text>
<text x="589.7" y="508.5" font-size="9.8" fill="#383838" letter-spacing="0" stroke="#383838" stroke-width="0.25" stroke-opacity="1">Genève</text>
<text x="622.5" y="508.4" font-size="9.3" fill="#383838" letter-spacing="0" stroke-width="2.4">Aigle</text>
<text x="622.5" y="508.4" font-size="9.3" fill="#383838" letter-spacing="0" stroke="#383838" stroke-width="0.25" stroke-opacity="1">Aigle</text>
<text x="650.4" y="513.1" font-size="8.5" fill="#a673b0" letter-spacing="0.2" stroke-width="2">Valais</text>
<text x="694" y="507.1" font-size="8.5" fill="#a673b0" letter-spacing="0.2" stroke-width="2">Tessin</text>
<text x="738.4" y="516.6" font-size="9.3" fill="#383838" letter-spacing="0" stroke-width="2.4">Sondrio</text>
<text x="738.4" y="516.6" font-size="9.3" fill="#383838" letter-spacing="0" stroke="#383838" stroke-width="0.25" stroke-opacity="1">Sondrio</text>
<text x="788.2" y="515.7" font-size="9.8" fill="#383838" letter-spacing="0" stroke-width="2.4">Trente</text>
<text x="788.2" y="515.7" font-size="9.8" fill="#383838" letter-spacing="0" stroke="#383838" stroke-width="0.25" stroke-opacity="1">Trente</text>
<text x="832.5" y="518.9" font-size="9.3" fill="#383838" letter-spacing="0" stroke-width="2.4">Belluno</text>
<text x="832.5" y="518.9" font-size="9.3" fill="#383838" letter-spacing="0" stroke="#383838" stroke-width="0.25" stroke-opacity="1">Belluno</text>
<text x="589" y="525.5" font-size="9.8" fill="#383838" letter-spacing="0" stroke-width="2.4">Annecy</text>
<text x="589" y="525.5" font-size="9.8" fill="#383838" letter-spacing="0" stroke="#383838" stroke-width="0.25" stroke-opacity="1">Annecy</text>
<text x="701.3" y="526.1" font-size="9.3" fill="#383838" letter-spacing="0" stroke-width="2.4">Lugano</text>
<text x="701.3" y="526.1" font-size="9.3" fill="#383838" letter-spacing="0" stroke="#383838" stroke-width="0.25" stroke-opacity="1">Lugano</text>
<text x="741.6" y="532.7" font-size="9.3" fill="#383838" letter-spacing="0" stroke-width="2.4">Clusone</text>
<text x="741.6" y="532.7" font-size="9.3" fill="#383838" letter-spacing="0" stroke="#383838" stroke-width="0.25" stroke-opacity="1">Clusone</text>
<text x="785.6" y="532.7" font-size="9.3" fill="#383838" letter-spacing="0" stroke-width="2.4">Rovereto</text>
<text x="785.6" y="532.7" font-size="9.3" fill="#383838" letter-spacing="0" stroke="#383838" stroke-width="0.25" stroke-opacity="1">Rovereto</text>
<text x="635.6" y="535.5" font-size="9.8" fill="#383838" letter-spacing="0" stroke-width="2.4">Aoste</text>
<text x="635.6" y="535.5" font-size="9.8" fill="#383838" letter-spacing="0" stroke="#383838" stroke-width="0.25" stroke-opacity="1">Aoste</text>
<text x="638" y="541.6" font-size="8.5" fill="#a673b0" letter-spacing="0.2" stroke-width="2">Vallée d'Aoste</text>
<text x="833.2" y="539.3" font-size="9.8" fill="#383838" letter-spacing="0" stroke-width="2.4">Trévise</text>
<text x="833.2" y="539.3" font-size="9.8" fill="#383838" letter-spacing="0" stroke="#383838" stroke-width="0.25" stroke-opacity="1">Trévise</text>
<text x="714.4" y="543.9" font-size="9.8" fill="#383838" letter-spacing="0" stroke-width="2.4">Monza</text>
<text x="714.4" y="543.9" font-size="9.8" fill="#383838" letter-spacing="0" stroke="#383838" stroke-width="0.25" stroke-opacity="1">Monza</text>
<text x="584.8" y="551.7" font-size="9.3" fill="#383838" letter-spacing="0" stroke-width="2.4">Chambéry</text>
<text x="584.8" y="551.7" font-size="9.3" fill="#383838" letter-spacing="0" stroke="#383838" stroke-width="0.25" stroke-opacity="1">Chambéry</text>
<text x="582" y="540.9" font-size="9.3" fill="#3582ab" letter-spacing="0.2" stroke-opacity="0.25" stroke-width="1.5" font-style="italic">La Voûte</text>
<text x="711" y="551.1" font-size="9.8" fill="#383838" letter-spacing="0" stroke-width="2.4">Milan</text>
<text x="711" y="551.1" font-size="9.8" fill="#383838" letter-spacing="0" stroke="#383838" stroke-width="0.25" stroke-opacity="1">Milan</text>
<text x="782.7" y="551.8" font-size="9.8" fill="#383838" letter-spacing="0" stroke-width="2.4">Vérone</text>
<text x="782.7" y="551.8" font-size="9.8" fill="#383838" letter-spacing="0" stroke="#383838" stroke-width="0.25" stroke-opacity="1">Vérone</text>
<text x="836.5" y="551.8" font-size="9.8" fill="#383838" letter-spacing="0" stroke-width="2.4">Venise</text>
<text x="836.5" y="551.8" font-size="9.8" fill="#383838" letter-spacing="0" stroke="#383838" stroke-width="0.25" stroke-opacity="1">Venise</text>
<text x="675.7" y="558.4" font-size="9.8" fill="#383838" letter-spacing="0" stroke-width="2.4">Verceil</text>
<text x="675.7" y="558.4" font-size="9.8" fill="#383838" letter-spacing="0" stroke="#383838" stroke-width="0.25" stroke-opacity="1">Verceil</text>
<text x="710.5" y="567.2" font-size="9.8" fill="#383838" letter-spacing="0" stroke-width="2.4">Pavie</text>
<text x="710.5" y="567.2" font-size="9.8" fill="#383838" letter-spacing="0" stroke="#383838" stroke-width="0.25" stroke-opacity="1">Pavie</text>
<text x="580" y="567.2" font-size="9.8" fill="#383838" letter-spacing="0" stroke-width="2.4">Grenoble</text>
<text x="580" y="567.2" font-size="9.8" fill="#383838" letter-spacing="0" stroke="#383838" stroke-width="0.25" stroke-opacity="1">Grenoble</text>
<text x="770.9" y="568.8" font-size="9.3" fill="#383838" letter-spacing="0" stroke-width="2.4">Goito</text>
<text x="770.9" y="568.8" font-size="9.3" fill="#383838" letter-spacing="0" stroke="#383838" stroke-width="0.25" stroke-opacity="1">Goito</text>
<text x="813.5" y="569.8" font-size="9.3" fill="#383838" letter-spacing="0" stroke-width="2.4">Monselice</text>
<text x="813.5" y="569.8" font-size="9.3" fill="#383838" letter-spacing="0" stroke="#383838" stroke-width="0.25" stroke-opacity="1">Monselice</text>
<text x="651.4" y="572.5" font-size="9.8" fill="#383838" letter-spacing="0" stroke-width="2.4">Turin</text>
<text x="651.4" y="572.5" font-size="9.8" fill="#383838" letter-spacing="0" stroke="#383838" stroke-width="0.25" stroke-opacity="1">Turin</text>
<text x="731.8" y="574.1" font-size="9.8" fill="#383838" letter-spacing="0" stroke-width="2.4">Plaisance</text>
<text x="731.8" y="574.1" font-size="9.8" fill="#383838" letter-spacing="0" stroke="#383838" stroke-width="0.25" stroke-opacity="1">Plaisance</text>
<text x="660.3" y="580.3" font-size="8.5" fill="#a673b0" letter-spacing="0.2" stroke-width="2">Piémont</text>
<text x="703.9" y="584.5" font-size="9.3" fill="#383838" letter-spacing="0" stroke-width="2.4">Voghera</text>
<text x="703.9" y="584.5" font-size="9.3" fill="#383838" letter-spacing="0" stroke="#383838" stroke-width="0.25" stroke-opacity="1">Voghera</text>
<text x="808.9" y="586.3" font-size="9.8" fill="#383838" letter-spacing="0" stroke-width="2.4">Ferrare</text>
<text x="808.9" y="586.3" font-size="9.8" fill="#383838" letter-spacing="0" stroke="#383838" stroke-width="0.25" stroke-opacity="1">Ferrare</text>
<text x="608.7" y="588.8" font-size="9.3" fill="#383838" letter-spacing="0" stroke-width="2.4">Briançon</text>
<text x="608.7" y="588.8" font-size="9.3" fill="#383838" letter-spacing="0" stroke="#383838" stroke-width="0.25" stroke-opacity="1">Briançon</text>
<text x="756.4" y="587.9" font-size="9.8" fill="#383838" letter-spacing="0" stroke-width="2.4">Parme</text>
<text x="756.4" y="587.9" font-size="9.8" fill="#383838" letter-spacing="0" stroke="#383838" stroke-width="0.25" stroke-opacity="1">Parme</text>
<text x="780" y="597.1" font-size="9.8" fill="#383838" letter-spacing="0" stroke-width="2.4">Modène</text>
<text x="780" y="597.1" font-size="9.8" fill="#383838" letter-spacing="0" stroke="#383838" stroke-width="0.25" stroke-opacity="1">Modène</text>
<text x="658" y="600.9" font-size="9.3" fill="#383838" letter-spacing="0" stroke-width="2.4">Bra</text>
<text x="658" y="600.9" font-size="9.3" fill="#383838" letter-spacing="0" stroke="#383838" stroke-width="0.25" stroke-opacity="1">Bra</text>
<text x="797.1" y="605.3" font-size="9.8" fill="#383838" letter-spacing="0" stroke-width="2.4">Bologne</text>
<text x="797.1" y="605.3" font-size="9.8" fill="#383838" letter-spacing="0" stroke="#383838" stroke-width="0.25" stroke-opacity="1">Bologne</text>
<text x="586.4" y="608.4" font-size="9.3" fill="#383838" letter-spacing="0" stroke-width="2.4">Gap</text>
<text x="586.4" y="608.4" font-size="9.3" fill="#383838" letter-spacing="0" stroke="#383838" stroke-width="0.25" stroke-opacity="1">Gap</text>
<text x="646.1" y="611.9" font-size="9.8" fill="#383838" letter-spacing="0" stroke-width="2.4">Coni</text>
<text x="646.1" y="611.9" font-size="9.8" fill="#383838" letter-spacing="0" stroke="#383838" stroke-width="0.25" stroke-opacity="1">Coni</text>
<text x="701.3" y="610.9" font-size="9.8" fill="#383838" letter-spacing="0" stroke-width="2.4">Gênes</text>
<text x="701.3" y="610.9" font-size="9.8" fill="#383838" letter-spacing="0" stroke="#383838" stroke-width="0.25" stroke-opacity="1">Gênes</text>
<text x="825.3" y="620.7" font-size="9.8" fill="#383838" letter-spacing="0" stroke-width="2.4">Forlì</text>
<text x="825.3" y="620.7" font-size="9.8" fill="#383838" letter-spacing="0" stroke="#383838" stroke-width="0.25" stroke-opacity="1">Forlì</text>
<text x="701.3" y="627.3" font-size="9.8" fill="#3582ab" letter-spacing="0.2" stroke-opacity="0.25" stroke-width="1.5" font-style="italic">Golfe de</text>
<text x="701.3" y="637.1" font-size="9.8" fill="#3582ab" letter-spacing="0.2" stroke-opacity="0.25" stroke-width="1.5" font-style="italic">Gênes</text>
<text x="748.9" y="631.2" font-size="9.8" fill="#383838" letter-spacing="0" stroke-width="2.4">Massa</text>
<text x="748.9" y="631.2" font-size="9.8" fill="#383838" letter-spacing="0" stroke="#383838" stroke-width="0.25" stroke-opacity="1">Massa</text>
<text x="840.8" y="634.5" font-size="9.8" fill="#383838" letter-spacing="0" stroke-width="2.4" font-weight="bold">Ville</text>
<text x="840.8" y="634.5" font-size="9.8" fill="#383838" letter-spacing="0" stroke="#383838" stroke-width="0.25" stroke-opacity="1" font-weight="bold">Ville</text>
<text x="840.8" y="643.7" font-size="9.8" fill="#383838" letter-spacing="0" stroke-width="2.4" font-weight="bold">de Saint-</text>
<text x="840.8" y="643.7" font-size="9.8" fill="#383838" letter-spacing="0" stroke="#383838" stroke-width="0.25" stroke-opacity="1" font-weight="bold">de Saint-</text>
<text x="840.8" y="652.9" font-size="9.8" fill="#383838" letter-spacing="0" stroke-width="2.4" font-weight="bold">Marin</text>
<text x="840.8" y="652.9" font-size="9.8" fill="#383838" letter-spacing="0" stroke="#383838" stroke-width="0.25" stroke-opacity="1" font-weight="bold">Marin</text>
<text x="788.2" y="639.5" font-size="9.8" fill="#383838" letter-spacing="0" stroke-width="2.4">Prato</text>
<text x="788.2" y="639.5" font-size="9.8" fill="#383838" letter-spacing="0" stroke="#383838" stroke-width="0.25" stroke-opacity="1">Prato</text>
<text x="583" y="628.5" font-size="8.5" fill="#a673b0" letter-spacing="0.2" stroke-width="2">Provence-</text>
<text x="583" y="636.7" font-size="8.5" fill="#a673b0" letter-spacing="0.2" stroke-width="2">Alpes-Côte</text>
<text x="583" y="644.3" font-size="8.5" fill="#a673b0" letter-spacing="0.2" stroke-width="2">d'Azur</text>
<text x="640.6" y="648.9" font-size="10.8" fill="#383838" letter-spacing="0" stroke-width="2.4" font-weight="bold">Monaco</text>
<text x="640.6" y="648.9" font-size="10.8" fill="#383838" letter-spacing="0" stroke="#383838" stroke-width="0.25" stroke-opacity="1" font-weight="bold">Monaco</text>
<text x="759.7" y="649.3" font-size="9.8" fill="#383838" letter-spacing="0" stroke-width="2.4">Pise</text>
<text x="759.7" y="649.3" font-size="9.8" fill="#383838" letter-spacing="0" stroke="#383838" stroke-width="0.25" stroke-opacity="1">Pise</text>
<text x="794.8" y="650.2" font-size="9.3" fill="#383838" letter-spacing="0" stroke-width="2.4">Fiesole</text>
<text x="794.8" y="650.2" font-size="9.3" fill="#383838" letter-spacing="0" stroke="#383838" stroke-width="0.25" stroke-opacity="1">Fiesole</text>
<text x="604.5" y="489.7" font-size="8.5" fill="#a673b0" letter-spacing="0.2" stroke-width="2">Vaud</text>
<text x="686" y="459.6" font-size="8.5" fill="#a673b0" letter-spacing="0.2" stroke-width="2">Zoug</text>
<text x="680" y="471.1" font-size="8.5" fill="#a673b0" letter-spacing="0.2" stroke-width="2">Nidwald</text>
<text x="689" y="480.1" font-size="8.5" fill="#a673b0" letter-spacing="0.2" stroke-width="2">Uri</text>
<text x="713" y="470.1" font-size="8.5" fill="#a673b0" letter-spacing="0.2" stroke-width="2">Glaris</text>
<text x="755" y="454.1" font-size="8.5" fill="#a673b0" letter-spacing="0.2" stroke-width="2">Vorarlberg</text>
<text x="800" y="455.1" font-size="8.5" fill="#a673b0" letter-spacing="0.2" stroke-width="2">Tyrol</text>
<text x="757" y="658.5" font-size="9.8" fill="#383838" letter-spacing="0" stroke-width="2.4">Livourne</text>
<text x="757" y="658.5" font-size="9.8" fill="#383838" letter-spacing="0" stroke="#383838" stroke-width="0.25" stroke-opacity="1">Livourne</text>
<text x="545" y="658.5" font-size="9.8" fill="#383838" letter-spacing="0" stroke-width="2.4">Aix-en-Provence</text>
<text x="545" y="658.5" font-size="9.8" fill="#383838" letter-spacing="0" stroke="#383838" stroke-width="0.25" stroke-opacity="1">Aix-en-Provence</text>
</g>
<circle cx="430.6" cy="362" r="17.5" fill="#b5e28c" opacity="0.6"/><circle cx="430.6" cy="362" r="12.5" fill="#6ecc39" opacity="0.6"/><text x="430.6" y="366" font-family="Liberation Sans, sans-serif" font-size="11" text-anchor="middle" fill="#333">8</text>
<ellipse cx="363" cy="451.3" rx="12" ry="5" fill="#000" opacity="0.18" transform="rotate(-20 363 451.3)" filter="url(#blur2)"/>
<ellipse cx="655.8" cy="426.2" rx="12" ry="5" fill="#000" opacity="0.18" transform="rotate(-20 655.8 426.2)" filter="url(#blur2)"/>
<ellipse cx="541.5" cy="524" rx="12" ry="5" fill="#000" opacity="0.18" transform="rotate(-20 541.5 524)" filter="url(#blur2)"/>
<ellipse cx="558" cy="639.6" rx="12" ry="5" fill="#000" opacity="0.18" transform="rotate(-20 558 639.6)" filter="url(#blur2)"/>
<ellipse cx="508.5" cy="412.6" rx="12" ry="5" fill="#000" opacity="0.18" transform="rotate(-20 508.5 412.6)" filter="url(#blur2)"/>
<ellipse cx="464" cy="574" rx="12" ry="5" fill="#000" opacity="0.18" transform="rotate(-20 464 574)" filter="url(#blur2)"/>
<path d="M354,455.3 C351,449.3 341,440.3 341,434.3 A13,13 0 1,1 367,434.3 C367,440.3 357,449.3 354,455.3 Z" fill="#145a8c"/><circle cx="354" cy="428.8" r="4" fill="#fff"/><path d="M347.5,439.8 L347.5,435.3 Q347.5,431.8 351,431.8 L357,431.8 Q360.5,431.8 360.5,435.3 L360.5,439.8 Z" fill="#fff"/>
<path d="M646.8,430.2 C643.8,424.2 633.8,415.2 633.8,409.2 A13,13 0 1,1 659.8,409.2 C659.8,415.2 649.8,424.2 646.8,430.2 Z" fill="#145a8c"/><circle cx="646.8" cy="403.7" r="4" fill="#fff"/><path d="M640.3,414.7 L640.3,410.2 Q640.3,406.7 643.8,406.7 L649.8,406.7 Q653.3,406.7 653.3,410.2 L653.3,414.7 Z" fill="#fff"/>
<path d="M532.5,528 C529.5,522 519.5,513 519.5,507 A13,13 0 1,1 545.5,507 C545.5,513 535.5,522 532.5,528 Z" fill="#145a8c"/><circle cx="532.5" cy="501.5" r="4" fill="#fff"/><path d="M526.0,512.5 L526.0,508 Q526.0,504.5 529.5,504.5 L535.5,504.5 Q539.0,504.5 539.0,508 L539.0,512.5 Z" fill="#fff"/>
<path d="M549,643.6 C546,637.6 536,628.6 536,622.6 A13,13 0 1,1 562,622.6 C562,628.6 552,637.6 549,643.6 Z" fill="#145a8c"/><circle cx="549" cy="617.1" r="4" fill="#fff"/><path d="M542.5,628.1 L542.5,623.6 Q542.5,620.1 546,620.1 L552,620.1 Q555.5,620.1 555.5,623.6 L555.5,628.1 Z" fill="#fff"/>
<path d="M499.5,416.6 C496.5,410.6 488.0,401.6 488.0,395.6 A11.5,11.5 0 1,1 511.0,395.6 C511.0,401.6 502.5,410.6 499.5,416.6 Z" fill="#fff" stroke="#ddd" stroke-width="0.5"/><rect x="488.0" y="388.6" width="17" height="16" rx="1.5" fill="#e8141c"/><rect x="489.5" y="393.1" width="14" height="10" fill="#fff"/><rect x="490.5" y="394.1" width="2.2" height="2" fill="#e8141c"/><rect x="490.5" y="397.1" width="2.2" height="2" fill="#e8141c"/><rect x="490.5" y="400.1" width="2.2" height="2" fill="#e8141c"/><rect x="493.9" y="394.1" width="2.2" height="2" fill="#e8141c"/><rect x="493.9" y="397.1" width="2.2" height="2" fill="#e8141c"/><rect x="493.9" y="400.1" width="2.2" height="2" fill="#e8141c"/><rect x="497.3" y="394.1" width="2.2" height="2" fill="#e8141c"/><rect x="497.3" y="397.1" width="2.2" height="2" fill="#e8141c"/><rect x="497.3" y="400.1" width="2.2" height="2" fill="#e8141c"/><rect x="500.7" y="394.1" width="2.2" height="2" fill="#e8141c"/><rect x="500.7" y="397.1" width="2.2" height="2" fill="#e8141c"/><rect x="500.7" y="400.1" width="2.2" height="2" fill="#e8141c"/><rect x="491.0" y="386.6" width="2" height="4" fill="#e8141c" stroke="#fff" stroke-width="0.6"/><rect x="500.0" y="386.6" width="2" height="4" fill="#e8141c" stroke="#fff" stroke-width="0.6"/>
<path d="M455,578 C452,572 443.5,563 443.5,557 A11.5,11.5 0 1,1 466.5,557 C466.5,563 458,572 455,578 Z" fill="#fff" stroke="#ddd" stroke-width="0.5"/><rect x="443.5" y="550" width="17" height="16" rx="1.5" fill="#e8141c"/><rect x="445.0" y="554.5" width="14" height="10" fill="#fff"/><rect x="446.0" y="555.5" width="2.2" height="2" fill="#e8141c"/><rect x="446.0" y="558.5" width="2.2" height="2" fill="#e8141c"/><rect x="446.0" y="561.5" width="2.2" height="2" fill="#e8141c"/><rect x="449.4" y="555.5" width="2.2" height="2" fill="#e8141c"/><rect x="449.4" y="558.5" width="2.2" height="2" fill="#e8141c"/><rect x="449.4" y="561.5" width="2.2" height="2" fill="#e8141c"/><rect x="452.8" y="555.5" width="2.2" height="2" fill="#e8141c"/><rect x="452.8" y="558.5" width="2.2" height="2" fill="#e8141c"/><rect x="452.8" y="561.5" width="2.2" height="2" fill="#e8141c"/><rect x="456.2" y="555.5" width="2.2" height="2" fill="#e8141c"/><rect x="456.2" y="558.5" width="2.2" height="2" fill="#e8141c"/><rect x="456.2" y="561.5" width="2.2" height="2" fill="#e8141c"/><rect x="446.5" y="548" width="2" height="4" fill="#e8141c" stroke="#fff" stroke-width="0.6"/><rect x="455.5" y="548" width="2" height="4" fill="#e8141c" stroke="#fff" stroke-width="0.6"/>
</svg><!--/MAP-->
<div style="position:absolute;left:10px;top:10px;width:28px;height:81px;border:1px solid rgba(0,0,0,0.28);border-radius:4px;background:#fff;overflow:hidden">
 <div style="position:absolute;left:0;top:0;width:26px;height:26px;border-bottom:1px solid #ddd"></div>
 <div style="position:absolute;left:0;top:26px;width:26px;height:27px;border-bottom:1px solid #ddd"></div>
 <div style="position:absolute;left:7px;top:12px;width:12px;height:2px;background:#000"></div>
 <div style="position:absolute;left:12px;top:7px;width:2px;height:12px;background:#000"></div>
 <div style="position:absolute;left:8px;top:38.5px;width:11px;height:1.6px;background:#000"></div>
 <div style="position:absolute;left:6px;top:59px;width:15px;height:13px;">
  <div style="position:absolute;left:0;top:0;width:4.5px;height:4.5px;border-left:2px solid #000;border-top:2px solid #000"></div>
  <div style="position:absolute;right:0;top:0;width:4.5px;height:4.5px;border-right:2px solid #000;border-top:2px solid #000"></div>
  <div style="position:absolute;left:0;bottom:0;width:4.5px;height:4.5px;border-left:2px solid #000;border-bottom:2px solid #000"></div>
  <div style="position:absolute;right:0;bottom:0;width:4.5px;height:4.5px;border-right:2px solid #000;border-bottom:2px solid #000"></div>
 </div>
</div>
<div style="position:absolute;left:10px;top:100.5px;width:205px;height:80.5px;border:1px solid rgba(0,0,0,0.3);border-radius:4px;background:#fff"></div>
<div class="a" style="left:16px;top:118px;font-size:10.5px;line-height:15px;color:#333">Affiche les balises<br>enregistrées au jeu. 14 août 2025, 19:13</div>
<div class="a" style="left:16px;top:159.2px;font-size:10.5px;line-height:15px;color:#0078a8">Rafraichir</div>
<div id="lay" style="position:absolute;left:702px;top:11px;width:142px;height:178px;background:rgba(255,255,255,0.5);border-radius:4px;box-shadow:0 0 2px rgba(0,0,0,0.15)"><div style="position:absolute;left:5.5px;top:9.100000000000023px;width:11px;height:11px;border-radius:50%;background:rgba(60,140,210,0.65);box-shadow:inset 0 0 0 2px rgba(240,248,255,0.6),0 0 0 1px rgba(60,140,210,0.5)"></div><div class="a" style="left:20.5px;top:7.600000000000023px;font-size:10.5px;line-height:14px;color:rgba(40,40,40,0.7)">OpenStreetMap France</div><div style="position:absolute;left:5.5px;top:25.0px;width:11px;height:11px;border-radius:50%;border:1px solid rgba(120,120,120,0.45)"></div><div class="a" style="left:20.5px;top:23.5px;font-size:10.5px;line-height:14px;color:rgba(40,40,40,0.7)">OpenTopoMap</div><div style="position:absolute;left:5.5px;top:41.5px;width:11px;height:11px;border-radius:50%;border:1px solid rgba(120,120,120,0.45)"></div><div class="a" style="left:20.5px;top:40px;font-size:10.5px;line-height:14px;color:rgba(40,40,40,0.7)">OpenStreetMap Mapnik</div><div style="position:absolute;left:5.5px;top:65.69999999999999px;width:12px;height:12px;border-radius:2px;background:rgba(80,150,215,0.75)"><svg width="12" height="12" style="position:absolute;left:0;top:0"><path d="M2.8,6.2 L5,8.4 L9.3,3.6" stroke="#fff" stroke-width="1.6" fill="none"/></svg></div><div class="a" style="left:20.5px;top:64.69999999999999px;font-size:10.5px;line-height:14px;color:rgba(40,40,40,0.7)">Flat6-Club Staff (4)</div><div style="position:absolute;left:5.5px;top:81.5px;width:12px;height:12px;border-radius:2px;background:rgba(80,150,215,0.75)"><svg width="12" height="12" style="position:absolute;left:0;top:0"><path d="M2.8,6.2 L5,8.4 L9.3,3.6" stroke="#fff" stroke-width="1.6" fill="none"/></svg></div><div class="a" style="left:20.5px;top:80.5px;font-size:10.5px;line-height:14px;color:rgba(40,40,40,0.7)">Membre BC911 (3)</div><div style="position:absolute;left:5.5px;top:97.60000000000002px;width:12px;height:12px;border-radius:2px;background:rgba(80,150,215,0.75)"><svg width="12" height="12" style="position:absolute;left:0;top:0"><path d="M2.8,6.2 L5,8.4 L9.3,3.6" stroke="#fff" stroke-width="1.6" fill="none"/></svg></div><div class="a" style="left:20.5px;top:96.60000000000002px;font-size:10.5px;line-height:14px;color:rgba(40,40,40,0.7)">Tech. (2)</div><div style="position:absolute;left:5.5px;top:113.39999999999998px;width:12px;height:12px;border-radius:2px;background:rgba(80,150,215,0.75)"><svg width="12" height="12" style="position:absolute;left:0;top:0"><path d="M2.8,6.2 L5,8.4 L9.3,3.6" stroke="#fff" stroke-width="1.6" fill="none"/></svg></div><div class="a" style="left:20.5px;top:112.39999999999998px;font-size:10.5px;line-height:14px;color:rgba(40,40,40,0.7)">Modérateur (1)</div><div style="position:absolute;left:5.5px;top:129.3px;width:12px;height:12px;border-radius:2px;background:rgba(80,150,215,0.75)"><svg width="12" height="12" style="position:absolute;left:0;top:0"><path d="M2.8,6.2 L5,8.4 L9.3,3.6" stroke="#fff" stroke-width="1.6" fill="none"/></svg></div><div class="a" style="left:20.5px;top:128.3px;font-size:10.5px;line-height:14px;color:rgba(40,40,40,0.7)">Partenaires (1)</div><div style="position:absolute;left:5.5px;top:145px;width:12px;height:12px;border-radius:2px;background:rgba(80,150,215,0.75)"><svg width="12" height="12" style="position:absolute;left:0;top:0"><path d="M2.8,6.2 L5,8.4 L9.3,3.6" stroke="#fff" stroke-width="1.6" fill="none"/></svg></div><div class="a" style="left:20.5px;top:144px;font-size:10.5px;line-height:14px;color:rgba(40,40,40,0.7)">Spot balade (1)</div><div style="position:absolute;left:5.5px;top:160.89999999999998px;width:12px;height:12px;border-radius:2px;background:rgba(80,150,215,0.75)"><svg width="12" height="12" style="position:absolute;left:0;top:0"><path d="M2.8,6.2 L5,8.4 L9.3,3.6" stroke="#fff" stroke-width="1.6" fill="none"/></svg></div><div class="a" style="left:20.5px;top:159.89999999999998px;font-size:10.5px;line-height:14px;color:rgba(40,40,40,0.7)">Evènements (3)</div></div>
<div style="position:absolute;left:5.5px;top:387px;width:51px;height:14.6px;border:2px solid #777;border-top:none;background:rgba(255,255,255,0.8)"></div>
<div class="a" style="left:11px;top:389px;font-size:10.5px;line-height:12px;color:#333">100 km</div>
<div style="position:absolute;left:5.5px;top:399.6px;width:83.5px;height:40px;border:2px solid #777;border-bottom:none;background:rgba(255,255,255,0.8)"></div>
<div class="a" style="left:11px;top:404.5px;font-size:10.5px;line-height:12px;color:#333">100 mi</div>
<div style="position:absolute;left:413.5px;top:406.5px;width:450px;height:30px;background:rgba(255,255,255,0.8)"></div>
<div style="position:absolute;left:416px;top:410px;width:12px;height:4px;background:#4c7be0"></div>
<div style="position:absolute;left:416px;top:414px;width:12px;height:4px;background:#ffd500"></div>
<div class="a" style="left:430.5px;top:408px;font-size:10.5px;line-height:12px;color:#333"><span style="color:#0078a8">Leaflet</span> | Powered by <span style="color:#0078a8">Geoapify</span>, © OpenStreetMap France | © <span style="color:#0078a8">OpenStreetMap</span> contributors</div>
</div>

</body></html>
